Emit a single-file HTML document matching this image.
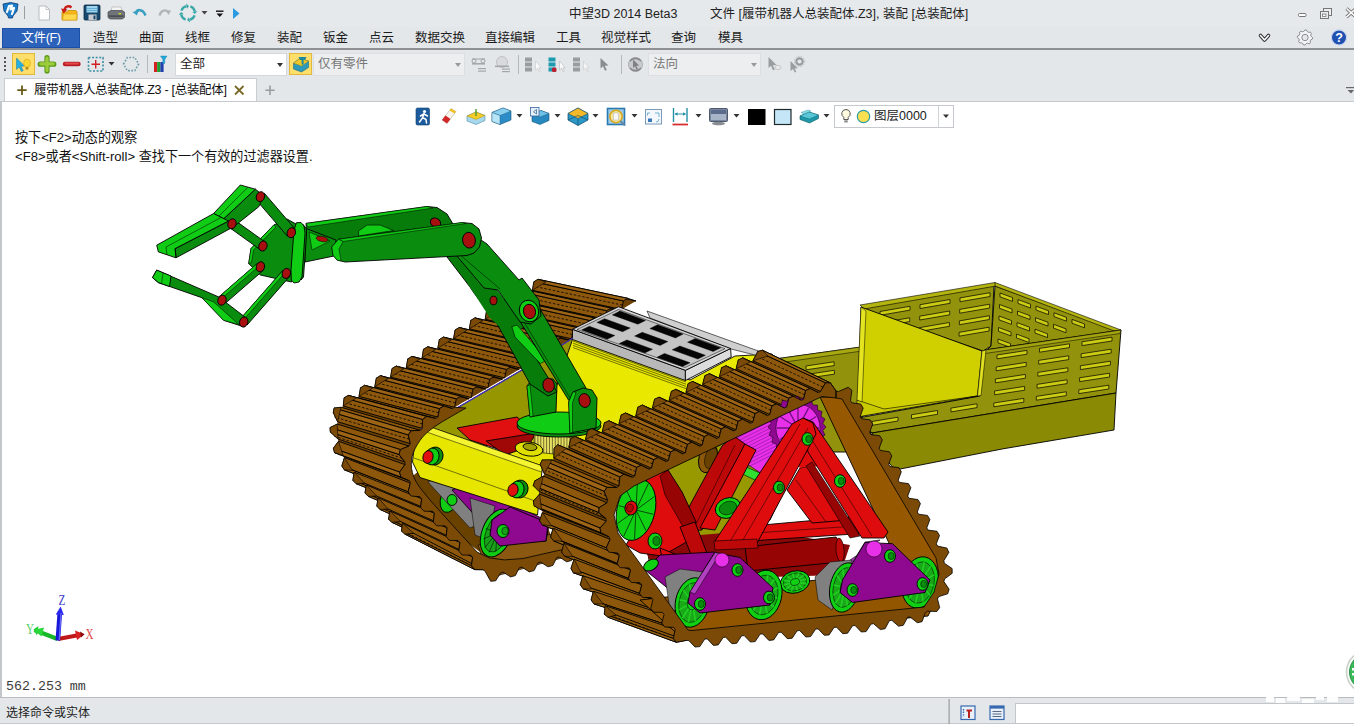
<!DOCTYPE html>
<html lang="zh-CN">
<head>
<meta charset="utf-8">
<title>中望3D 2014 Beta3</title>
<style>
html,body{margin:0;padding:0;}
body{width:1354px;height:724px;overflow:hidden;background:#e4e7ea;position:relative;
 font-family:"Liberation Sans","Noto Sans CJK SC",sans-serif;font-size:12.5px;color:#1a1a1a;}
.abs{position:absolute;white-space:nowrap;}
#titlebar{left:0;top:0;width:1354px;height:27px;background:#e6e9ec;}
#menubar{left:0;top:27px;width:1354px;height:21px;background:#e4e7ea;}
#menuline{left:0;top:48px;width:1354px;height:2px;background:#8e9194;}
#filebtn{left:2px;top:28px;width:78px;height:20px;background:#2d62ba;border:1px solid #1d4fa5;box-sizing:border-box;color:#fff;text-align:center;line-height:18px;font-size:12.5px;letter-spacing:-0.3px;}
.mi{top:29px;height:18px;line-height:18px;font-size:12.5px;color:#1c1c1c;}
#toolbar{left:0;top:50px;width:1354px;height:28px;background:#e4e7ea;}
#tabbar{left:0;top:78px;width:1354px;height:23px;background:#e4e7ea;}
#tab{left:4px;top:78px;width:253px;height:23px;background:#fff;border:1px solid #c9ccd0;border-bottom:none;box-sizing:border-box;}
#viewport{left:0;top:101px;width:1354px;height:596px;background:#fff;border-left:2px solid #c4c7ca;border-top:1px solid #c6cace;box-sizing:border-box;}
#statusbar{left:0;top:697px;width:1354px;height:27px;background:#e4e7ea;border-top:1px solid #b8bcc0;border-bottom:1px solid #c4c8cc;box-sizing:border-box;}
.tt{font-size:12.5px;color:#222;}
.combo{background:#fff;border:1px solid #d5d8db;box-sizing:border-box;height:23px;line-height:21px;font-size:12.5px;}
.combo.dis{background:#eceef0;color:#777;border-color:#dcdfe2;}
.arr{position:absolute;width:0;height:0;border-left:3.5px solid transparent;border-right:3.5px solid transparent;border-top:4px solid #333;}
</style>
</head>
<body>
<!-- TITLE BAR -->
<div id="titlebar" class="abs"></div>
<div class="abs tt" style="left:569px;top:6px;line-height:16px;">中望3D 2014 Beta3</div>
<div class="abs tt" style="left:710px;top:6px;line-height:16px;">文件 [履带机器人总装配体.Z3], 装配 [总装配体]</div>
<!-- MENU BAR -->
<div id="menubar" class="abs"></div>
<div id="filebtn" class="abs">文件(F)</div>
<div class="abs mi" style="left:93px;">造型</div>
<div class="abs mi" style="left:139px;">曲面</div>
<div class="abs mi" style="left:185px;">线框</div>
<div class="abs mi" style="left:231px;">修复</div>
<div class="abs mi" style="left:277px;">装配</div>
<div class="abs mi" style="left:323px;">钣金</div>
<div class="abs mi" style="left:369px;">点云</div>
<div class="abs mi" style="left:415px;">数据交换</div>
<div class="abs mi" style="left:485px;">直接编辑</div>
<div class="abs mi" style="left:556px;">工具</div>
<div class="abs mi" style="left:601px;">视觉样式</div>
<div class="abs mi" style="left:671px;">查询</div>
<div class="abs mi" style="left:718px;">模具</div>
<div id="menuline" class="abs"></div>
<!-- TOOLBAR -->
<div id="toolbar" class="abs"></div>
<div class="abs" style="left:12px;top:53px;width:23px;height:22px;background:#ffdf6b;border:1px solid #e3b63c;box-sizing:border-box;"></div>
<div class="abs combo" style="left:175px;top:53px;width:112px;padding-left:4px;">全部<span class="arr" style="left:101px;top:9px;"></span></div>
<div class="abs" style="left:289px;top:53px;width:23px;height:22px;background:#ffdf6b;border:1px solid #e3b63c;box-sizing:border-box;"></div>
<div class="abs combo dis" style="left:313px;top:53px;width:152px;padding-left:4px;">仅有零件<span class="arr" style="left:141px;top:9px;border-top-color:#999;"></span></div>
<div class="abs combo dis" style="left:648px;top:53px;width:113px;padding-left:4px;">法向<span class="arr" style="left:102px;top:9px;border-top-color:#999;"></span></div>
<!-- TAB BAR -->
<div id="tabbar" class="abs"></div>
<div id="tab" class="abs"></div>
<div class="abs" style="left:34px;top:82px;line-height:16px;font-size:12.5px;letter-spacing:-0.28px;color:#111;">履带机器人总装配体.Z3 - [总装配体]</div>
<!-- VIEWPORT -->
<div id="viewport" class="abs"></div>
<div class="abs" style="left:15px;top:129px;line-height:17px;font-size:13.1px;color:#111;">按下&lt;F2&gt;动态的观察</div>
<div class="abs" style="left:15px;top:148px;line-height:17px;font-size:13.1px;color:#111;">&lt;F8&gt;或者&lt;Shift-roll&gt; 查找下一个有效的过滤器设置.</div>
<div class="abs" style="left:6px;top:678.5px;line-height:16px;font-size:13.3px;color:#3c3c3c;font-family:'Liberation Mono','Noto Serif CJK SC',monospace;">562.253 mm</div>
<svg class="abs" style="left:0;top:0" width="1354" height="724" viewBox="0 0 1354 724" stroke-linejoin="round">
<polygon points="775.0,359.0 861.0,347.0 859.0,409.0 880.0,452.0 790.0,452.0" fill="#92920c" stroke="#000" stroke-width="0.9" />
<polygon points="775.0,359.0 861.0,347.0 862.0,351.0 778.0,363.0" fill="#a8a810" stroke="#000" stroke-width="0.5" />
<polygon points="806.0,366.0 834.0,361.8 834.2,365.6 806.2,369.8" fill="#cccc14" stroke="#000" stroke-width="0.7" />
<polygon points="806.3,374.5 834.3,370.3 834.5,374.1 806.5,378.3" fill="#cccc14" stroke="#000" stroke-width="0.7" />
<polygon points="863.0,308.0 994.0,285.5 991.0,346.0 983.0,351.0 866.0,311.0" fill="#92920c" stroke="#000" stroke-width="0.9" />
<polygon points="880.0,311.5 910.0,306.3 910.0,310.1 880.0,315.3" fill="#cccc14" stroke="#000" stroke-width="0.7" />
<polygon points="879.7,323.0 909.7,317.8 909.7,321.6 879.7,326.8" fill="#cccc14" stroke="#000" stroke-width="0.7" />
<polygon points="920.0,304.7 950.0,299.5 950.0,303.3 920.0,308.5" fill="#cccc14" stroke="#000" stroke-width="0.7" />
<polygon points="919.7,316.2 949.7,311.0 949.7,314.8 919.7,320.0" fill="#cccc14" stroke="#000" stroke-width="0.7" />
<polygon points="919.4,327.7 949.4,322.5 949.4,326.3 919.4,331.5" fill="#cccc14" stroke="#000" stroke-width="0.7" />
<polygon points="960.0,297.9 990.0,292.7 990.0,296.5 960.0,301.7" fill="#cccc14" stroke="#000" stroke-width="0.7" />
<polygon points="959.7,309.4 989.7,304.2 989.7,308.0 959.7,313.2" fill="#cccc14" stroke="#000" stroke-width="0.7" />
<polygon points="959.4,320.9 989.4,315.7 989.4,319.5 959.4,324.7" fill="#cccc14" stroke="#000" stroke-width="0.7" />
<polygon points="959.1,332.4 989.1,327.2 989.1,331.0 959.1,336.2" fill="#cccc14" stroke="#000" stroke-width="0.7" />
<polygon points="995.0,286.0 1118.0,331.0 987.0,350.0 991.0,346.0" fill="#92920c" stroke="#000" stroke-width="0.9" />
<polygon points="1000.0,293.0 1012.5,297.6 1012.5,301.4 1000.0,296.8" fill="#cccc14" stroke="#000" stroke-width="0.7" />
<polygon points="999.5,304.5 1012.0,309.1 1012.0,312.9 999.5,308.3" fill="#cccc14" stroke="#000" stroke-width="0.7" />
<polygon points="999.0,316.0 1011.5,320.6 1011.5,324.4 999.0,319.8" fill="#cccc14" stroke="#000" stroke-width="0.7" />
<polygon points="998.5,327.5 1011.0,332.1 1011.0,335.9 998.5,331.3" fill="#cccc14" stroke="#000" stroke-width="0.7" />
<polygon points="998.0,339.0 1010.5,343.6 1010.5,347.4 998.0,342.8" fill="#cccc14" stroke="#000" stroke-width="0.7" />
<polygon points="1018.0,299.6 1030.5,304.2 1030.5,308.0 1018.0,303.4" fill="#cccc14" stroke="#000" stroke-width="0.7" />
<polygon points="1017.5,311.1 1030.0,315.7 1030.0,319.5 1017.5,314.9" fill="#cccc14" stroke="#000" stroke-width="0.7" />
<polygon points="1017.0,322.6 1029.5,327.2 1029.5,331.0 1017.0,326.4" fill="#cccc14" stroke="#000" stroke-width="0.7" />
<polygon points="1016.5,334.1 1029.0,338.7 1029.0,342.5 1016.5,337.9" fill="#cccc14" stroke="#000" stroke-width="0.7" />
<polygon points="1036.0,306.2 1048.5,310.8 1048.5,314.6 1036.0,310.0" fill="#cccc14" stroke="#000" stroke-width="0.7" />
<polygon points="1035.5,317.7 1048.0,322.3 1048.0,326.1 1035.5,321.5" fill="#cccc14" stroke="#000" stroke-width="0.7" />
<polygon points="1035.0,329.2 1047.5,333.8 1047.5,337.6 1035.0,333.0" fill="#cccc14" stroke="#000" stroke-width="0.7" />
<polygon points="1054.0,312.8 1066.5,317.4 1066.5,321.2 1054.0,316.6" fill="#cccc14" stroke="#000" stroke-width="0.7" />
<polygon points="1053.5,324.3 1066.0,328.9 1066.0,332.7 1053.5,328.1" fill="#cccc14" stroke="#000" stroke-width="0.7" />
<polygon points="1072.0,319.4 1084.5,324.0 1084.5,327.8 1072.0,323.2" fill="#cccc14" stroke="#000" stroke-width="0.7" />
<polygon points="860.0,305.0 995.0,282.5 996.0,286.0 864.0,309.0" fill="#b4b410" stroke="#000" stroke-width="0.6" />
<polygon points="995.0,282.5 1121.0,330.0 1117.0,332.0 995.0,286.0" fill="#b4b410" stroke="#000" stroke-width="0.6" />
<polygon points="985.0,350.0 1121.0,330.0 1116.0,393.0 872.0,433.0 858.0,418.0 980.0,396.0" fill="#92920c" stroke="#000" stroke-width="0.9" />
<polygon points="985.0,350.0 1121.0,330.0 1120.0,333.5 985.0,353.5" fill="#a4a410" stroke="#000" stroke-width="0.5" />
<polygon points="997.0,355.0 1027.0,350.4 1027.0,354.2 997.0,358.8" fill="#cccc14" stroke="#000" stroke-width="0.7" />
<polygon points="996.2,367.0 1026.2,362.4 1026.2,366.2 996.2,370.8" fill="#cccc14" stroke="#000" stroke-width="0.7" />
<polygon points="995.4,379.0 1025.4,374.4 1025.4,378.2 995.4,382.8" fill="#cccc14" stroke="#000" stroke-width="0.7" />
<polygon points="994.6,391.0 1024.6,386.4 1024.6,390.2 994.6,394.8" fill="#cccc14" stroke="#000" stroke-width="0.7" />
<polygon points="993.8,403.0 1023.8,398.4 1023.8,402.2 993.8,406.8" fill="#cccc14" stroke="#000" stroke-width="0.7" />
<polygon points="1039.5,348.4 1069.5,343.8 1069.5,347.6 1039.5,352.2" fill="#cccc14" stroke="#000" stroke-width="0.7" />
<polygon points="1038.7,360.4 1068.7,355.8 1068.7,359.6 1038.7,364.2" fill="#cccc14" stroke="#000" stroke-width="0.7" />
<polygon points="1037.9,372.4 1067.9,367.8 1067.9,371.6 1037.9,376.2" fill="#cccc14" stroke="#000" stroke-width="0.7" />
<polygon points="1037.1,384.4 1067.1,379.8 1067.1,383.6 1037.1,388.2" fill="#cccc14" stroke="#000" stroke-width="0.7" />
<polygon points="1036.3,396.4 1066.3,391.8 1066.3,395.6 1036.3,400.2" fill="#cccc14" stroke="#000" stroke-width="0.7" />
<polygon points="1082.0,341.8 1112.0,337.2 1112.0,341.0 1082.0,345.6" fill="#cccc14" stroke="#000" stroke-width="0.7" />
<polygon points="1081.2,353.8 1111.2,349.2 1111.2,353.0 1081.2,357.6" fill="#cccc14" stroke="#000" stroke-width="0.7" />
<polygon points="1080.4,365.8 1110.4,361.2 1110.4,365.0 1080.4,369.6" fill="#cccc14" stroke="#000" stroke-width="0.7" />
<polygon points="1079.6,377.8 1109.6,373.2 1109.6,377.0 1079.6,381.6" fill="#cccc14" stroke="#000" stroke-width="0.7" />
<polygon points="1078.8,389.8 1108.8,385.2 1108.8,389.0 1078.8,393.6" fill="#cccc14" stroke="#000" stroke-width="0.7" />
<polygon points="872.0,421.5 898.0,417.2 898.0,421.0 872.0,425.3" fill="#cccc14" stroke="#000" stroke-width="0.7" />
<polygon points="911.5,414.8 937.5,410.5 937.5,414.3 911.5,418.6" fill="#cccc14" stroke="#000" stroke-width="0.7" />
<polygon points="951.0,408.1 977.0,403.8 977.0,407.6 951.0,411.9" fill="#cccc14" stroke="#000" stroke-width="0.7" />
<polygon points="872.0,433.0 1116.0,393.0 1114.0,430.0 1002.0,449.0 895.0,470.0 880.0,452.0" fill="#8a8a04" stroke="#000" stroke-width="0.9" />
<polygon points="861.0,307.0 982.0,351.0 977.5,396.0 857.0,417.0" fill="#d0d000" stroke="#000" stroke-width="0.9" />
<polygon points="857.0,400.0 884.0,409.0 977.5,396.0 977.5,396.0 857.0,417.0" fill="#caca00" stroke="#000" stroke-width="0.6" />
<polygon points="861.0,307.0 866.0,311.0 862.0,402.0 857.0,400.0" fill="#e4e420" stroke="#000" stroke-width="0.5" />
<polygon points="982.0,351.0 986.0,350.0 981.0,395.5 977.5,396.0" fill="#e0e020" stroke="#000" stroke-width="0.5" />
<polygon points="636.0,301.0 631.3,303.7 626.6,306.5 621.9,309.2 617.2,312.0 612.6,314.7 607.9,317.5 603.2,320.2 598.5,323.0 593.8,325.7 589.1,328.5 584.4,331.2 579.7,334.0 575.1,336.7 570.4,339.5 565.7,342.2 561.0,345.0 556.3,347.7 551.6,350.5 546.9,353.2 542.2,355.9 537.6,358.7 532.9,361.4 528.2,364.2 523.5,366.9 518.8,369.7 514.1,372.4 509.4,375.2 504.7,377.9 500.1,380.7 495.4,383.4 490.7,386.2 486.0,388.9 481.3,391.7 476.6,394.4 471.9,397.2 467.2,399.9 462.6,402.6 457.9,405.4 453.2,408.1 448.5,410.9 443.8,413.6 439.1,416.4 434.4,419.1 429.9,422.1 425.6,425.4 421.6,429.1 417.9,433.1 414.5,437.3 411.5,441.8 408.7,446.5 406.6,451.5 405.3,456.8 404.9,462.2 405.3,467.6 406.4,472.9 408.1,478.1 410.4,483.0 413.1,487.7 416.2,492.2 419.7,496.4 423.2,500.5 426.8,504.6 430.4,508.7 433.9,512.8 437.5,516.9 441.1,521.0 444.6,525.1 448.2,529.2 451.8,533.3 455.3,537.4 458.9,541.4 462.5,545.5 466.0,549.6 469.6,553.7 473.2,557.8 476.8,561.9 480.3,566.0 483.9,570.1 487.7,573.9 492.9,574.9 420.0,539.0 417.7,537.0 414.1,533.7 410.4,530.4 406.8,527.1 403.1,523.8 399.4,520.5 395.8,517.1 392.4,513.6 389.1,509.9 385.8,506.3 382.5,502.6 379.2,498.9 375.9,495.2 372.6,491.6 369.2,488.0 365.8,484.4 362.4,480.9 359.0,477.3 355.6,473.7 352.2,470.2 349.5,466.0 347.0,461.8 344.4,457.6 341.8,453.4 340.2,448.8 339.1,444.0 337.9,439.2 336.8,434.4 336.3,429.5 337.1,424.7 337.9,419.8 338.8,415.0 339.6,410.1 342.5,406.5 346.9,403.8 351.4,401.1 355.8,398.3 360.2,395.6 364.6,392.9 369.1,390.2 373.5,387.5 377.9,384.8 382.3,382.1 386.7,379.4 391.2,376.7 395.6,374.0 400.0,371.3 404.4,368.6 408.9,365.9 413.3,363.2 417.7,360.5 422.1,357.8 426.6,355.1 431.0,352.4 435.4,349.6 439.8,346.9 444.3,344.2 448.7,341.5 453.1,338.8 457.5,336.1 461.9,333.4 466.4,330.7 470.8,328.0 475.2,325.3 479.6,322.6 484.1,319.9 488.5,317.2 492.9,314.5 497.3,311.8 501.8,309.1 506.2,306.4 510.6,303.6 515.0,300.9 519.5,298.2 523.9,295.5 528.3,292.8 532.7,290.1 537.2,287.4 541.6,284.7 546.0,282.0" fill="#6e4204" stroke="#000" stroke-width="0" />
<polygon points="636.0,301.0 627.7,298.3 538.0,279.3 546.0,282.0" fill="#8e580c" stroke="#000" stroke-width="0.9" />
<polygon points="623.4,300.9 621.6,309.4 532.4,290.3 533.9,281.8" fill="#8e580c" stroke="#000" stroke-width="0.9" />
<polyline points="622.5,305.1 533.0,286.1" fill="none" stroke="#000" stroke-width="0.8" stroke-dasharray="2.5 1.8"/>
<polygon points="627.7,298.3 623.4,300.9 533.9,281.8 538.0,279.3" fill="#9c6414" stroke="#000" stroke-width="0.9" />
<polygon points="546.0,282.0 538.0,279.3 533.9,281.8 532.4,290.3" fill="#7a4a06" stroke="#000" stroke-width="0.6" />
<polygon points="619.3,310.8 611.0,308.1 522.2,288.9 530.2,291.6" fill="#8e580c" stroke="#000" stroke-width="0.9" />
<polygon points="606.7,310.7 604.9,319.2 516.7,299.9 518.1,291.4" fill="#8e580c" stroke="#000" stroke-width="0.9" />
<polyline points="605.8,314.9 517.3,295.7" fill="none" stroke="#000" stroke-width="0.8" stroke-dasharray="2.5 1.8"/>
<polygon points="611.0,308.1 606.7,310.7 518.1,291.4 522.2,288.9" fill="#9c6414" stroke="#000" stroke-width="0.9" />
<polygon points="530.2,291.6 522.2,288.9 518.1,291.4 516.7,299.9" fill="#7a4a06" stroke="#000" stroke-width="0.6" />
<polygon points="602.6,320.6 594.3,317.9 506.5,298.6 514.5,301.3" fill="#8e580c" stroke="#000" stroke-width="0.9" />
<polygon points="590.0,320.5 588.2,329.0 500.9,309.6 502.4,301.1" fill="#8e580c" stroke="#000" stroke-width="0.9" />
<polyline points="589.1,324.7 501.5,305.3" fill="none" stroke="#000" stroke-width="0.8" stroke-dasharray="2.5 1.8"/>
<polygon points="594.3,317.9 590.0,320.5 502.4,301.1 506.5,298.6" fill="#9c6414" stroke="#000" stroke-width="0.9" />
<polygon points="514.5,301.3 506.5,298.6 502.4,301.1 500.9,309.6" fill="#7a4a06" stroke="#000" stroke-width="0.6" />
<polygon points="585.9,330.4 577.6,327.7 490.7,308.2 498.7,310.9" fill="#8e580c" stroke="#000" stroke-width="0.9" />
<polygon points="573.2,330.2 571.5,338.8 485.2,319.2 486.6,310.7" fill="#8e580c" stroke="#000" stroke-width="0.9" />
<polyline points="572.4,334.5 485.7,315.0" fill="none" stroke="#000" stroke-width="0.8" stroke-dasharray="2.5 1.8"/>
<polygon points="577.6,327.7 573.2,330.2 486.6,310.7 490.7,308.2" fill="#9c6414" stroke="#000" stroke-width="0.9" />
<polygon points="498.7,310.9 490.7,308.2 486.6,310.7 485.2,319.2" fill="#7a4a06" stroke="#000" stroke-width="0.6" />
<polygon points="569.2,340.2 560.9,337.5 474.9,317.9 482.9,320.6" fill="#8e580c" stroke="#000" stroke-width="0.9" />
<polygon points="556.5,340.0 554.8,348.6 469.4,328.9 470.8,320.4" fill="#8e580c" stroke="#000" stroke-width="0.9" />
<polyline points="555.7,344.3 470.0,324.6" fill="none" stroke="#000" stroke-width="0.8" stroke-dasharray="2.5 1.8"/>
<polygon points="560.9,337.5 556.5,340.0 470.8,320.4 474.9,317.9" fill="#9c6414" stroke="#000" stroke-width="0.9" />
<polygon points="482.9,320.6 474.9,317.9 470.8,320.4 469.4,328.9" fill="#7a4a06" stroke="#000" stroke-width="0.6" />
<polygon points="552.5,349.9 544.2,347.3 459.2,327.5 467.2,330.2" fill="#8e580c" stroke="#000" stroke-width="0.9" />
<polygon points="539.8,349.8 538.1,358.4 453.6,338.5 455.1,330.0" fill="#8e580c" stroke="#000" stroke-width="0.9" />
<polyline points="539.0,354.1 454.2,334.3" fill="none" stroke="#000" stroke-width="0.8" stroke-dasharray="2.5 1.8"/>
<polygon points="544.2,347.3 539.8,349.8 455.1,330.0 459.2,327.5" fill="#9c6414" stroke="#000" stroke-width="0.9" />
<polygon points="467.2,330.2 459.2,327.5 455.1,330.0 453.6,338.5" fill="#7a4a06" stroke="#000" stroke-width="0.6" />
<polygon points="535.8,359.7 527.5,357.1 443.4,337.1 451.4,339.9" fill="#8e580c" stroke="#000" stroke-width="0.9" />
<polygon points="523.1,359.6 521.4,368.2 437.9,348.1 439.3,339.6" fill="#8e580c" stroke="#000" stroke-width="0.9" />
<polyline points="522.3,363.9 438.4,343.9" fill="none" stroke="#000" stroke-width="0.8" stroke-dasharray="2.5 1.8"/>
<polygon points="527.5,357.1 523.1,359.6 439.3,339.6 443.4,337.1" fill="#9c6414" stroke="#000" stroke-width="0.9" />
<polygon points="451.4,339.9 443.4,337.1 439.3,339.6 437.9,348.1" fill="#7a4a06" stroke="#000" stroke-width="0.6" />
<polygon points="519.1,369.5 510.8,366.9 427.6,346.8 435.7,349.5" fill="#8e580c" stroke="#000" stroke-width="0.9" />
<polygon points="506.4,369.4 504.7,377.9 422.1,357.8 423.5,349.3" fill="#8e580c" stroke="#000" stroke-width="0.9" />
<polyline points="505.6,373.7 422.7,353.6" fill="none" stroke="#000" stroke-width="0.8" stroke-dasharray="2.5 1.8"/>
<polygon points="510.8,366.9 506.4,369.4 423.5,349.3 427.6,346.8" fill="#9c6414" stroke="#000" stroke-width="0.9" />
<polygon points="435.7,349.5 427.6,346.8 423.5,349.3 422.1,357.8" fill="#7a4a06" stroke="#000" stroke-width="0.6" />
<polygon points="502.4,379.3 494.1,376.6 411.9,356.4 419.9,359.1" fill="#8e580c" stroke="#000" stroke-width="0.9" />
<polygon points="489.7,379.2 488.0,387.7 406.3,367.4 407.8,358.9" fill="#8e580c" stroke="#000" stroke-width="0.9" />
<polyline points="488.9,383.5 406.9,363.2" fill="none" stroke="#000" stroke-width="0.8" stroke-dasharray="2.5 1.8"/>
<polygon points="494.1,376.6 489.7,379.2 407.8,358.9 411.9,356.4" fill="#9c6414" stroke="#000" stroke-width="0.9" />
<polygon points="419.9,359.1 411.9,356.4 407.8,358.9 406.3,367.4" fill="#7a4a06" stroke="#000" stroke-width="0.6" />
<polygon points="485.7,389.1 477.4,386.4 396.1,366.1 404.1,368.8" fill="#8e580c" stroke="#000" stroke-width="0.9" />
<polygon points="473.0,389.0 471.3,397.5 390.6,377.1 392.0,368.6" fill="#8e580c" stroke="#000" stroke-width="0.9" />
<polyline points="472.2,393.3 391.2,372.8" fill="none" stroke="#000" stroke-width="0.8" stroke-dasharray="2.5 1.8"/>
<polygon points="477.4,386.4 473.0,389.0 392.0,368.6 396.1,366.1" fill="#9c6414" stroke="#000" stroke-width="0.9" />
<polygon points="404.1,368.8 396.1,366.1 392.0,368.6 390.6,377.1" fill="#7a4a06" stroke="#000" stroke-width="0.6" />
<polygon points="469.0,398.9 460.7,396.2 380.3,375.7 388.4,378.4" fill="#8e580c" stroke="#000" stroke-width="0.9" />
<polygon points="456.3,398.8 454.6,407.3 374.8,386.7 376.3,378.2" fill="#8e580c" stroke="#000" stroke-width="0.9" />
<polyline points="455.5,403.0 375.4,382.5" fill="none" stroke="#000" stroke-width="0.8" stroke-dasharray="2.5 1.8"/>
<polygon points="460.7,396.2 456.3,398.8 376.3,378.2 380.3,375.7" fill="#9c6414" stroke="#000" stroke-width="0.9" />
<polygon points="388.4,378.4 380.3,375.7 376.3,378.2 374.8,386.7" fill="#7a4a06" stroke="#000" stroke-width="0.6" />
<polygon points="452.3,408.7 444.0,406.0 364.6,385.3 372.6,388.1" fill="#8e580c" stroke="#000" stroke-width="0.9" />
<polygon points="439.6,408.6 437.9,417.1 359.0,396.4 360.5,387.9" fill="#8e580c" stroke="#000" stroke-width="0.9" />
<polyline points="438.7,412.8 359.6,392.1" fill="none" stroke="#000" stroke-width="0.8" stroke-dasharray="2.5 1.8"/>
<polygon points="444.0,406.0 439.6,408.6 360.5,387.9 364.6,385.3" fill="#9c6414" stroke="#000" stroke-width="0.9" />
<polygon points="372.6,388.1 364.6,385.3 360.5,387.9 359.0,396.4" fill="#7a4a06" stroke="#000" stroke-width="0.6" />
<polygon points="435.5,418.5 426.7,416.4 348.2,395.4 356.8,397.7" fill="#8e580c" stroke="#000" stroke-width="0.9" />
<polygon points="422.7,419.4 422.2,428.4 343.3,406.0 344.1,397.9" fill="#8e580c" stroke="#000" stroke-width="0.9" />
<polyline points="422.5,423.9 343.9,402.4" fill="none" stroke="#000" stroke-width="0.8" stroke-dasharray="2.5 1.8"/>
<polygon points="426.7,416.4 422.7,419.4 344.1,397.9 348.2,395.4" fill="#9c6414" stroke="#000" stroke-width="0.9" />
<polygon points="356.8,397.7 348.2,395.4 344.1,397.9 343.3,406.0" fill="#7a4a06" stroke="#000" stroke-width="0.6" />
<polygon points="420.4,430.4 411.3,430.8 334.1,408.1 341.1,407.3" fill="#8e580c" stroke="#000" stroke-width="0.9" />
<polygon points="408.3,434.9 410.3,443.6 337.6,421.7 333.3,412.6" fill="#8e580c" stroke="#000" stroke-width="0.9" />
<polyline points="409.3,439.2 334.3,417.0" fill="none" stroke="#000" stroke-width="0.8" stroke-dasharray="2.5 1.8"/>
<polygon points="411.3,430.8 408.3,434.9 333.3,412.6 334.1,408.1" fill="#9c6414" stroke="#000" stroke-width="0.9" />
<polygon points="341.1,407.3 334.1,408.1 333.3,412.6 337.6,421.7" fill="#7a4a06" stroke="#000" stroke-width="0.6" />
<polygon points="409.0,446.0 400.4,449.6 330.0,427.6 337.2,424.1" fill="#8e580c" stroke="#000" stroke-width="0.9" />
<polygon points="399.1,454.5 404.9,461.9 337.9,438.9 330.4,432.1" fill="#8e580c" stroke="#000" stroke-width="0.9" />
<polyline points="402.0,458.2 333.3,435.8" fill="none" stroke="#000" stroke-width="0.8" stroke-dasharray="2.5 1.8"/>
<polygon points="400.4,449.6 399.1,454.5 330.4,432.1 330.0,427.6" fill="#9c6414" stroke="#000" stroke-width="0.9" />
<polygon points="337.2,424.1 330.0,427.6 330.4,432.1 337.9,438.9" fill="#7a4a06" stroke="#000" stroke-width="0.6" />
<polygon points="405.0,464.6 399.6,472.1 333.4,448.2 338.5,441.3" fill="#8e580c" stroke="#000" stroke-width="0.9" />
<polygon points="400.9,477.0 409.3,480.6 343.2,455.5 334.5,452.6" fill="#8e580c" stroke="#000" stroke-width="0.9" />
<polyline points="405.1,478.8 338.7,454.5" fill="none" stroke="#000" stroke-width="0.8" stroke-dasharray="2.5 1.8"/>
<polygon points="399.6,472.1 400.9,477.0 334.5,452.6 333.4,448.2" fill="#9c6414" stroke="#000" stroke-width="0.9" />
<polygon points="338.5,441.3 333.4,448.2 334.5,452.6 343.2,455.5" fill="#7a4a06" stroke="#000" stroke-width="0.6" />
<polygon points="410.4,483.1 408.1,491.9 341.9,465.9 344.4,457.6" fill="#8e580c" stroke="#000" stroke-width="0.9" />
<polygon points="411.0,496.0 419.9,496.7 352.4,470.4 344.3,469.8" fill="#8e580c" stroke="#000" stroke-width="0.9" />
<polyline points="415.5,496.3 348.8,470.2" fill="none" stroke="#000" stroke-width="0.8" stroke-dasharray="2.5 1.8"/>
<polygon points="408.1,491.9 411.0,496.0 344.3,469.8 341.9,465.9" fill="#9c6414" stroke="#000" stroke-width="0.9" />
<polygon points="344.4,457.6 341.9,465.9 344.3,469.8 352.4,470.4" fill="#7a4a06" stroke="#000" stroke-width="0.6" />
<polygon points="421.7,498.7 420.6,507.4 352.9,480.3 354.1,472.2" fill="#8e580c" stroke="#000" stroke-width="0.9" />
<polygon points="423.9,511.2 432.7,511.3 364.6,483.2 356.0,483.6" fill="#8e580c" stroke="#000" stroke-width="0.9" />
<polyline points="428.3,511.2 360.4,483.7" fill="none" stroke="#000" stroke-width="0.8" stroke-dasharray="2.5 1.8"/>
<polygon points="420.6,507.4 423.9,511.2 356.0,483.6 352.9,480.3" fill="#9c6414" stroke="#000" stroke-width="0.9" />
<polygon points="354.1,472.2 352.9,480.3 356.0,483.6 364.6,483.2" fill="#7a4a06" stroke="#000" stroke-width="0.6" />
<polygon points="434.4,513.3 433.3,522.0 365.0,493.0 366.3,484.9" fill="#8e580c" stroke="#000" stroke-width="0.9" />
<polygon points="436.7,525.8 445.4,525.9 376.6,496.0 368.2,496.3" fill="#8e580c" stroke="#000" stroke-width="0.9" />
<polyline points="441.0,525.8 372.5,496.4" fill="none" stroke="#000" stroke-width="0.8" stroke-dasharray="2.5 1.8"/>
<polygon points="433.3,522.0 436.7,525.8 368.2,496.3 365.0,493.0" fill="#9c6414" stroke="#000" stroke-width="0.9" />
<polygon points="366.3,484.9 365.0,493.0 368.2,496.3 376.6,496.0" fill="#7a4a06" stroke="#000" stroke-width="0.6" />
<polygon points="447.1,527.9 446.1,536.6 376.8,506.0 378.2,497.8" fill="#8e580c" stroke="#000" stroke-width="0.9" />
<polygon points="449.4,540.4 458.1,540.5 388.3,509.1 379.9,509.4" fill="#8e580c" stroke="#000" stroke-width="0.9" />
<polyline points="453.7,540.4 384.2,509.5" fill="none" stroke="#000" stroke-width="0.8" stroke-dasharray="2.5 1.8"/>
<polygon points="446.1,536.6 449.4,540.4 379.9,509.4 376.8,506.0" fill="#9c6414" stroke="#000" stroke-width="0.9" />
<polygon points="378.2,497.8 376.8,506.0 379.9,509.4 388.3,509.1" fill="#7a4a06" stroke="#000" stroke-width="0.6" />
<polygon points="459.9,542.5 458.8,551.2 388.6,519.1 389.9,510.9" fill="#8e580c" stroke="#000" stroke-width="0.9" />
<polygon points="462.1,555.0 470.8,555.1 400.7,521.5 391.8,522.3" fill="#8e580c" stroke="#000" stroke-width="0.9" />
<polyline points="466.4,555.0 396.2,522.3" fill="none" stroke="#000" stroke-width="0.8" stroke-dasharray="2.5 1.8"/>
<polygon points="458.8,551.2 462.1,555.0 391.8,522.3 388.6,519.1" fill="#9c6414" stroke="#000" stroke-width="0.9" />
<polygon points="389.9,510.9 388.6,519.1 391.8,522.3 400.7,521.5" fill="#7a4a06" stroke="#000" stroke-width="0.6" />
<polygon points="472.6,557.1 471.5,565.8 401.5,531.0 402.5,523.2" fill="#8e580c" stroke="#000" stroke-width="0.9" />
<polygon points="474.8,569.6 483.5,569.7 413.7,533.3 404.9,534.1" fill="#8e580c" stroke="#000" stroke-width="0.9" />
<polyline points="479.2,569.6 409.2,534.1" fill="none" stroke="#000" stroke-width="0.8" stroke-dasharray="2.5 1.8"/>
<polygon points="471.5,565.8 474.8,569.6 404.9,534.1 401.5,531.0" fill="#9c6414" stroke="#000" stroke-width="0.9" />
<polygon points="402.5,523.2 401.5,531.0 404.9,534.1 413.7,533.3" fill="#7a4a06" stroke="#000" stroke-width="0.6" />
<polygon points="421.0,429.0 527.0,367.0 573.0,338.0 600.0,360.0 590.0,440.0 470.0,446.0" fill="#969600" stroke="#000" stroke-width="0.9" />
<polygon points="573.0,338.0 690.0,380.0 735.0,356.0 772.0,354.0 776.0,366.0 562.0,462.0 540.0,470.0 545.0,420.0" fill="#e8e800" stroke="#000" stroke-width="0.9" />
<polyline points="573.0,341.0 686.0,382.0" fill="none" stroke="#000" stroke-width="0.5" />
<polyline points="573.0,343.2 686.0,384.2" fill="none" stroke="#000" stroke-width="0.5" />
<polyline points="573.0,345.4 686.0,386.4" fill="none" stroke="#000" stroke-width="0.5" />
<polyline points="573.0,347.6 686.0,388.6" fill="none" stroke="#000" stroke-width="0.5" />
<polygon points="647.0,311.0 764.0,353.0 763.0,357.0 731.0,349.0 650.0,318.0" fill="#cfcfcf" stroke="#000" stroke-width="0.6" />
<polygon points="572.5,329.3 685.4,370.3 685.4,380.5 572.5,339.5" fill="#b8b8b8" stroke="#000" stroke-width="0.9" />
<polygon points="685.4,370.3 730.6,348.5 731.2,357.0 685.4,380.5" fill="#dcdcdc" stroke="#000" stroke-width="0.9" />
<polygon points="572.5,329.3 618.5,306.7 730.6,348.5 685.4,370.3" fill="#d4d4d4" stroke="#000" stroke-width="0.9" />
<polygon points="577.0,329.5 618.5,309.5 725.0,348.7 685.0,367.5" fill="#c4c4c4" stroke="#000" stroke-width="0.5" />
<polygon points="581.6,330.0 607.2,339.3 614.8,335.5 589.3,326.2" fill="#050505" stroke="#000" stroke-width="0.4" />
<polygon points="596.9,322.4 622.5,331.7 630.2,328.0 604.6,318.7" fill="#050505" stroke="#000" stroke-width="0.4" />
<polygon points="612.3,314.9 637.8,324.2 645.5,320.4 619.9,311.1" fill="#050505" stroke="#000" stroke-width="0.4" />
<polygon points="619.2,343.6 644.8,352.9 652.5,349.2 626.9,339.9" fill="#050505" stroke="#000" stroke-width="0.4" />
<polygon points="634.6,336.1 660.1,345.4 667.8,341.6 642.2,332.3" fill="#050505" stroke="#000" stroke-width="0.4" />
<polygon points="649.9,328.6 675.5,337.9 683.1,334.1 657.6,324.8" fill="#050505" stroke="#000" stroke-width="0.4" />
<polygon points="656.9,357.3 682.4,366.6 690.1,362.8 664.5,353.5" fill="#050505" stroke="#000" stroke-width="0.4" />
<polygon points="672.2,349.8 697.8,359.1 705.4,355.3 679.9,346.0" fill="#050505" stroke="#000" stroke-width="0.4" />
<polygon points="687.5,342.2 713.1,351.5 720.8,347.8 695.2,338.5" fill="#050505" stroke="#000" stroke-width="0.4" />
<polyline points="421.0,429.0 527.0,367.0 573.0,338.0" fill="none" stroke="#4030c0" stroke-width="1.2" />
<polygon points="470.0,436.0 545.0,420.0 575.0,440.0 560.0,475.0 540.0,468.0" fill="#e4e400" stroke="#000" stroke-width="0" />
<polygon points="457.0,428.0 517.0,417.0 536.0,433.0 510.0,453.0 470.0,440.0" fill="#e01010" stroke="#000" stroke-width="0.9" />
<polygon points="486.0,441.0 536.0,433.0 528.0,447.0 505.0,455.0" fill="#a00808" stroke="#000" stroke-width="0.9" />
<polygon points="534.0,432.0 574.0,438.0 574.0,456.0 534.0,452.0" fill="#e8e060" stroke="#000" stroke-width="0.6" />
<polyline points="535.0,434.0 535.0,452.0" fill="none" stroke="#000" stroke-width="0.5" />
<polyline points="537.9,434.3 537.9,452.3" fill="none" stroke="#000" stroke-width="0.5" />
<polyline points="540.8,434.6 540.8,452.6" fill="none" stroke="#000" stroke-width="0.5" />
<polyline points="543.7,434.9 543.7,452.9" fill="none" stroke="#000" stroke-width="0.5" />
<polyline points="546.6,435.2 546.6,453.2" fill="none" stroke="#000" stroke-width="0.5" />
<polyline points="549.5,435.5 549.5,453.5" fill="none" stroke="#000" stroke-width="0.5" />
<polyline points="552.4,435.8 552.4,453.8" fill="none" stroke="#000" stroke-width="0.5" />
<polyline points="555.3,436.1 555.3,454.1" fill="none" stroke="#000" stroke-width="0.5" />
<polyline points="558.2,436.4 558.2,454.4" fill="none" stroke="#000" stroke-width="0.5" />
<polyline points="561.1,436.7 561.1,454.7" fill="none" stroke="#000" stroke-width="0.5" />
<polyline points="564.0,437.0 564.0,455.0" fill="none" stroke="#000" stroke-width="0.5" />
<polyline points="566.9,437.3 566.9,455.3" fill="none" stroke="#000" stroke-width="0.5" />
<polyline points="569.8,437.6 569.8,455.6" fill="none" stroke="#000" stroke-width="0.5" />
<polyline points="572.7,437.9 572.7,455.9" fill="none" stroke="#000" stroke-width="0.5" />
<ellipse cx="529.0" cy="449.0" rx="14.0" ry="7.0" fill="#e0e000" stroke="#000" stroke-width="0.9" transform="rotate(8 529.0 449.0)"/>
<ellipse cx="530.0" cy="447.0" rx="7.0" ry="3.5" fill="#a0a000" stroke="#000" stroke-width="0.9" transform="rotate(8 530.0 447.0)"/>
<polygon points="408.0,480.0 422.0,500.0 450.0,530.0 487.0,557.0 556.0,549.0 545.0,520.0 420.0,470.0" fill="#6a4200" stroke="#000" stroke-width="0" />
<polygon points="489.0,578.0 580.0,553.0 560.0,533.0 478.0,545.0" fill="#8a5810" stroke="#000" stroke-width="0.6" />
<ellipse cx="450.0" cy="498.0" rx="9.0" ry="15.0" fill="#10cc14" stroke="#000" stroke-width="0.9" transform="rotate(20 450.0 498.0)"/>
<polygon points="428.0,482.0 442.0,475.0 470.0,492.0 488.0,520.0 470.0,528.0" fill="#808080" stroke="#000" stroke-width="0.5" />
<polygon points="452.0,490.0 470.0,482.0 545.0,520.0 549.0,524.0 546.0,541.0 500.0,544.0 488.0,530.0" fill="#8e0890" stroke="#000" stroke-width="0.9" />
<polygon points="470.0,498.0 495.0,506.0 488.0,540.0 475.0,535.0" fill="#787878" stroke="#000" stroke-width="0.5" />
<ellipse cx="497.0" cy="533.0" rx="15.0" ry="25.0" fill="#10cc14" stroke="#000" stroke-width="0.9" transform="rotate(22 497.0 533.0)"/>
<ellipse cx="497.0" cy="533.0" rx="11.0" ry="20.0" fill="#18a018" stroke="#000" stroke-width="0.5" transform="rotate(22 497.0 533.0)"/>
<polyline points="485.0,533.0 509.0,533.0" fill="none" stroke="#000" stroke-width="0.5" transform="rotate(22 497 533)"/>
<polyline points="486.6,522.5 507.4,543.5" fill="none" stroke="#000" stroke-width="0.5" transform="rotate(22 497 533)"/>
<polyline points="491.0,514.8 503.0,551.2" fill="none" stroke="#000" stroke-width="0.5" transform="rotate(22 497 533)"/>
<polyline points="497.0,512.0 497.0,554.0" fill="none" stroke="#000" stroke-width="0.5" transform="rotate(22 497 533)"/>
<polyline points="503.0,514.8 491.0,551.2" fill="none" stroke="#000" stroke-width="0.5" transform="rotate(22 497 533)"/>
<polyline points="507.4,522.5 486.6,543.5" fill="none" stroke="#000" stroke-width="0.5" transform="rotate(22 497 533)"/>
<polygon points="492.0,520.0 510.0,507.0 548.0,523.0 546.0,541.0 500.0,546.0 490.0,535.0" fill="#8e0890" stroke="#000" stroke-width="0.9" />
<ellipse cx="503.0" cy="531.0" rx="6.0" ry="6.5" fill="#10cc14" stroke="#000" stroke-width="0.9"/>
<ellipse cx="505.0" cy="531.0" rx="3.2" ry="3.8" fill="#18a018" stroke="#000" stroke-width="0.5"/>
<ellipse cx="452.0" cy="500.0" rx="5.0" ry="5.5" fill="#10cc14" stroke="#000" stroke-width="0.9"/>
<polygon points="427.5,426.0 542.5,466.0 537.5,515.0 420.0,477.5 412.5,462.0 415.0,440.0" fill="#e6e600" stroke="#000" stroke-width="0.9" />
<polygon points="427.5,426.0 542.5,466.0 541.5,472.0 425.0,431.5" fill="#f4f430" stroke="#000" stroke-width="0.5" />
<polyline points="414.0,458.0 538.0,502.0" fill="none" stroke="#000" stroke-width="0.5" />
<ellipse cx="435.0" cy="456.0" rx="8.0" ry="9.0" fill="#0a8c0e" stroke="#000" stroke-width="0.9" transform="rotate(15 435.0 456.0)"/>
<ellipse cx="432.0" cy="456.5" rx="7.0" ry="8.5" fill="#10cc14" stroke="#000" stroke-width="0.9" transform="rotate(15 432.0 456.5)"/>
<ellipse cx="428.0" cy="457.0" rx="5.0" ry="6.5" fill="#e01010" stroke="#000" stroke-width="0.9" transform="rotate(15 428.0 457.0)"/>
<ellipse cx="520.0" cy="489.0" rx="8.0" ry="9.0" fill="#0a8c0e" stroke="#000" stroke-width="0.9" transform="rotate(15 520.0 489.0)"/>
<ellipse cx="517.0" cy="489.5" rx="7.0" ry="8.5" fill="#10cc14" stroke="#000" stroke-width="0.9" transform="rotate(15 517.0 489.5)"/>
<ellipse cx="513.0" cy="490.0" rx="5.0" ry="6.5" fill="#e01010" stroke="#000" stroke-width="0.9" transform="rotate(15 513.0 490.0)"/>
<polygon points="636.0,301.0 636.0,301.0 636.0,301.0 636.0,301.0 636.0,301.0 636.0,301.0 636.0,301.0 636.0,301.0 636.0,301.0 636.0,301.0 636.0,301.0 636.0,301.0 636.0,301.0 636.0,301.0 636.0,301.0 636.0,301.0 636.0,301.0 636.0,301.0 636.0,301.0 636.0,301.0 636.0,301.0 636.0,301.0 636.0,301.0 636.0,301.0 636.0,301.0 636.0,301.0 636.0,301.0 636.0,301.0 636.0,301.0 636.0,301.0 636.0,301.0 636.0,301.0 636.0,301.0 636.0,301.0 636.0,301.0 636.0,301.0 636.0,301.0 636.0,301.0 636.0,301.0 636.0,301.0 636.0,301.0 636.0,301.0 636.0,301.0 636.0,301.0 636.0,301.0 636.0,301.0 636.0,301.0 636.0,301.0 636.0,301.0 636.0,301.0 636.0,301.0 636.0,301.0 636.0,301.0 636.0,301.0 636.0,301.0 636.0,301.0 636.0,301.0 636.0,301.0 636.0,301.0 636.0,301.0 636.0,301.0 636.0,301.0 636.0,301.0 636.0,301.0 636.0,301.0 636.0,301.0 636.0,301.0 636.0,301.0 636.0,301.0 636.0,301.0 636.0,301.0 636.0,301.0 636.0,301.0 636.0,301.0 636.0,301.0 636.0,301.0 636.0,301.0 636.0,301.0 636.0,301.0 636.0,301.0 636.0,301.0 546.0,282.0 546.0,282.0 546.0,282.0 546.0,282.0 546.0,282.0 546.0,282.0 546.0,282.0 546.0,282.0 546.0,282.0 546.0,282.0 546.0,282.0 546.0,282.0 546.0,282.0 546.0,282.0 546.0,282.0 546.0,282.0 546.0,282.0 546.0,282.0 546.0,282.0 546.0,282.0 546.0,282.0 546.0,282.0 546.0,282.0 546.0,282.0 546.0,282.0 546.0,282.0 546.0,282.0 546.0,282.0 546.0,282.0 546.0,282.0 546.0,282.0 546.0,282.0 546.0,282.0 546.0,282.0 546.0,282.0 546.0,282.0 546.0,282.0 546.0,282.0 546.0,282.0 546.0,282.0 546.0,282.0 546.0,282.0 546.0,282.0 546.0,282.0 546.0,282.0 546.0,282.0 546.0,282.0 546.0,282.0 546.0,282.0 546.0,282.0 546.0,282.0 546.0,282.0 546.0,282.0 546.0,282.0 546.0,282.0 546.0,282.0 546.0,282.0 546.0,282.0 546.0,282.0 546.0,282.0 546.0,282.0 546.0,282.0 546.0,282.0 546.0,282.0 546.0,282.0 546.0,282.0 546.0,282.0 546.0,282.0 546.0,282.0 546.0,282.0 546.0,282.0 546.0,282.0 546.0,282.0 546.0,282.0 546.0,282.0 546.0,282.0 546.0,282.0 546.0,282.0 546.0,282.0 546.0,282.0 546.0,282.0" fill="#6e4204" stroke="#000" stroke-width="0" />
<polygon points="454.6,407.3 452.3,408.7 444.0,406.0 439.6,408.6 437.9,417.1 435.5,418.5 426.7,416.4 422.7,419.4 422.2,428.4 420.4,430.4 411.3,430.8 408.3,434.9 410.3,443.6 409.0,446.0 400.4,449.6 399.1,454.5 404.9,461.9 405.0,464.6 399.6,472.1 400.9,477.0 409.3,480.6 410.4,483.1 408.1,491.9 411.0,496.0 419.9,496.7 421.7,498.7 420.6,507.4 423.9,511.2 432.7,511.3 434.4,513.3 433.3,522.0 436.7,525.8 445.4,525.9 447.1,527.9 446.1,536.6 449.4,540.4 458.1,540.5 459.9,542.5 458.8,551.2 462.1,555.0 470.8,555.1 472.6,557.1 471.5,565.8 474.8,569.6 483.5,569.7 485.3,571.7 490.7,581.3 495.7,580.8 500.6,572.9 503.2,572.2 510.5,576.9 515.4,575.6 519.3,567.8 521.9,567.1 529.2,571.9 534.1,570.6 538.0,562.8 540.6,562.1 547.9,566.8 552.8,565.5 556.7,557.7 559.3,557.0 566.6,561.8 571.5,560.5 575.4,552.7 578.0,552.0 578.0,546.0 572.5,547.2 561.5,549.8 545.0,553.5 523.0,558.5 504.4,559.9 489.1,557.8 477.2,552.1 468.8,542.9 460.6,534.0 452.9,525.5 445.5,517.4 438.5,509.6 432.3,502.6 427.0,496.4 422.6,490.9 418.9,486.1 416.0,481.5 413.8,477.0 412.4,472.6 411.6,468.4 411.3,464.2 411.5,460.2 412.2,456.4 413.3,452.6 415.0,448.8 417.2,444.8 419.9,440.6 423.1,436.4 427.9,431.8 434.3,426.9 442.2,421.8 451.8,416.2 458.9,412.1 463.6,409.4 466.0,408.0" fill="#7a4a06" stroke="#000" stroke-width="0.8" />
<ellipse cx="559.0" cy="426.0" rx="42.0" ry="11.0" fill="#0a8c0e" stroke="#000" stroke-width="0.9"/>
<ellipse cx="559.0" cy="423.0" rx="42.0" ry="11.0" fill="#10cc14" stroke="#000" stroke-width="0.9"/>
<polygon points="527.0,386.0 533.0,378.0 553.0,379.0 557.0,384.0 556.0,412.0 530.0,417.0" fill="#0a8c0e" stroke="#000" stroke-width="0.9" />
<polygon points="527.0,386.0 530.0,385.0 533.0,416.0 530.0,417.0" fill="#10cc14" stroke="#000" stroke-width="0.5" />
<polygon points="447.0,257.0 462.0,249.0 500.0,300.0 557.0,392.0 548.0,396.0 530.0,384.0 496.0,322.0 474.0,293.0 470.0,287.0" fill="#087c0a" stroke="#000" stroke-width="0.9" />
<polygon points="468.0,284.0 490.0,280.0 524.0,326.0 512.0,338.0 490.0,318.0" fill="#087c0a" stroke="#000" stroke-width="0" />
<ellipse cx="493.5" cy="300.5" rx="3.5" ry="4.3" fill="#a81010" stroke="#000" stroke-width="0.9"/>
<polygon points="511.8,326.7 517.0,325.0 547.0,360.0 540.3,363.5 515.0,337.0" fill="#10cc14" stroke="#000" stroke-width="0.6" />
<polygon points="477.0,262.0 483.0,259.0 497.0,277.0 493.0,281.0" fill="#10cc14" stroke="#000" stroke-width="0.6" />
<polygon points="518.0,318.0 536.0,302.0 586.0,388.0 578.0,400.0 568.7,400.3" fill="#0a8c0e" stroke="#000" stroke-width="0.9" />
<polyline points="521.0,317.0 570.0,398.0" fill="none" stroke="#000" stroke-width="0.5" />
<polygon points="456.0,255.0 481.0,240.0 487.0,244.0 519.0,280.0 522.0,278.0 539.0,300.0 541.0,316.0 531.0,324.0 520.0,322.0 498.0,290.0 484.0,288.0" fill="#0a8c0e" stroke="#000" stroke-width="0.9" />
<polyline points="459.0,254.0 500.0,289.0" fill="none" stroke="#000" stroke-width="0.5" />
<ellipse cx="529.0" cy="311.0" rx="9.5" ry="11.0" fill="#10cc14" stroke="#000" stroke-width="0.9" transform="rotate(-20 529.0 311.0)"/>
<ellipse cx="529.5" cy="311.5" rx="6.0" ry="7.3" fill="#a81010" stroke="#000" stroke-width="0.9" transform="rotate(-15 529.5 311.5)"/>
<ellipse cx="548.6" cy="385.2" rx="5.7" ry="7.0" fill="#a81010" stroke="#000" stroke-width="0.9" transform="rotate(-10 548.6 385.2)"/>
<polygon points="568.7,402.0 573.0,392.0 583.0,388.0 592.0,390.0 597.0,398.0 596.0,428.0 570.0,433.0" fill="#0a8c0e" stroke="#000" stroke-width="0.9" />
<polygon points="568.7,402.0 573.0,392.0 576.0,392.0 572.5,403.0 572.5,432.5 570.0,433.0" fill="#10cc14" stroke="#000" stroke-width="0.5" />
<ellipse cx="584.6" cy="400.5" rx="5.7" ry="7.0" fill="#a81010" stroke="#000" stroke-width="0.9" transform="rotate(-10 584.6 400.5)"/>
<polygon points="306.0,223.4 427.0,206.5 437.0,207.5 447.0,214.0 453.0,224.0 452.0,238.0 338.0,254.0 308.0,254.0" fill="#087c0a" stroke="#000" stroke-width="0.9" />
<polygon points="306.0,223.4 427.0,206.5 433.0,208.0 308.0,227.0" fill="#10cc14" stroke="#000" stroke-width="0.5" />
<ellipse cx="435.5" cy="222.6" rx="4.4" ry="5.4" fill="#a81010" stroke="#000" stroke-width="0.9" transform="rotate(-60 435.5 222.6)"/>
<polygon points="305.0,228.0 336.0,240.0 334.0,256.0 305.0,262.0" fill="#0a8c0e" stroke="#000" stroke-width="0.9" />
<polygon points="309.0,232.0 330.0,241.0 312.0,250.0" fill="#10cc14" stroke="#000" stroke-width="0.5" />
<ellipse cx="322.0" cy="239.0" rx="6.0" ry="2.6" fill="#a81010" stroke="#000" stroke-width="0.5" transform="rotate(12 322.0 239.0)"/>
<polygon points="358.6,231.0 367.0,225.1 380.3,225.1 393.7,230.5 358.6,236.0" fill="#10cc14" stroke="#000" stroke-width="0.6" />
<polygon points="338.5,239.3 462.3,222.6 472.0,223.5 479.0,229.0 481.5,238.0 479.5,247.0 474.0,253.0 467.0,255.5 345.2,262.0 337.0,260.0 333.0,255.0 331.8,247.0" fill="#0a8c0e" stroke="#000" stroke-width="0.9" />
<polygon points="338.5,239.3 462.3,222.6 466.0,223.5 343.0,241.5" fill="#10cc14" stroke="#000" stroke-width="0.5" />
<polygon points="331.8,247.0 338.5,239.3 343.0,241.5 339.0,249.0 341.0,261.0 337.0,260.0 333.0,255.0" fill="#10cc14" stroke="#000" stroke-width="0.5" />
<ellipse cx="469.0" cy="240.2" rx="6.4" ry="7.9" fill="#a81010" stroke="#000" stroke-width="0.9" transform="rotate(-10 469.0 240.2)"/>
<polygon points="251.0,248.6 273.8,225.0 287.0,219.0 296.0,224.0 291.5,282.0 260.4,275.0 248.7,263.6" fill="#0a8c0e" stroke="#000" stroke-width="0.9" />
<polygon points="251.0,248.6 273.8,225.0 276.0,227.0 253.5,250.0 251.5,262.5 248.7,263.6" fill="#10cc14" stroke="#000" stroke-width="0.5" />
<polygon points="303.0,224.5 306.5,229.0 306.5,235.0 303.5,277.0 301.0,280.0" fill="#0a8c0e" stroke="#000" stroke-width="0.9" />
<polygon points="296.4,222.7 301.0,222.5 304.0,226.0 305.0,233.0 302.0,277.0 299.0,282.0 294.0,283.0 291.3,280.0 291.0,270.0 294.0,230.0" fill="#10cc14" stroke="#000" stroke-width="0.9" />
<polygon points="256.4,200.1 287.3,236.1 295.3,229.3 264.4,193.3" fill="#0a8c0e" stroke="#000" stroke-width="0.9" />
<polygon points="229.4,227.5 260.3,249.7 265.5,242.3 234.6,220.1" fill="#0a8c0e" stroke="#000" stroke-width="0.9" />
<polygon points="225.0,303.6 263.4,270.2 257.4,263.4 219.0,296.8" fill="#0a8c0e" stroke="#000" stroke-width="0.9" />
<polygon points="219.0,296.8 257.4,263.4 259.4,265.7 221.0,299.1" fill="#10cc14" stroke="#000" stroke-width="0.5" />
<polygon points="247.1,325.0 289.7,276.4 282.9,270.4 240.3,319.0" fill="#0a8c0e" stroke="#000" stroke-width="0.9" />
<polygon points="240.3,319.0 282.9,270.4 285.2,272.4 242.6,321.0" fill="#10cc14" stroke="#000" stroke-width="0.5" />
<polygon points="223.6,218.8 255.4,189.2 263.7,195.9 258.7,206.8 233.6,226.8" fill="#0a8c0e" stroke="#000" stroke-width="0.9" />
<polygon points="213.6,213.5 240.3,185.0 255.4,189.2 223.6,218.8" fill="#10cc14" stroke="#000" stroke-width="0.9" />
<polyline points="219.0,216.0 248.0,187.2" fill="none" stroke="#000" stroke-width="0.5" />
<polygon points="175.1,248.6 228.6,221.0 233.6,226.8 176.0,257.8" fill="#0a8c0e" stroke="#000" stroke-width="0.9" />
<polygon points="156.7,245.2 213.6,213.5 228.6,221.0 175.1,248.6 176.0,257.8 158.4,251.9" fill="#10cc14" stroke="#000" stroke-width="0.9" />
<polyline points="166.0,247.0 221.0,217.5" fill="none" stroke="#000" stroke-width="0.5" />
<polyline points="175.1,248.6 176.0,257.8" fill="none" stroke="#000" stroke-width="0.5" />
<polyline points="166.0,247.0 167.0,255.0" fill="none" stroke="#000" stroke-width="0.5" />
<polygon points="156.7,270.1 218.6,296.9 247.0,318.6 244.5,327.0 223.6,320.3 201.9,297.7 158.4,282.6 152.5,277.6" fill="#0a8c0e" stroke="#000" stroke-width="0.9" />
<polygon points="156.7,270.1 171.0,276.0 169.5,286.5 158.4,282.6 152.5,277.6" fill="#10cc14" stroke="#000" stroke-width="0.9" />
<polyline points="163.0,273.0 161.5,283.5" fill="none" stroke="#000" stroke-width="0.5" />
<polygon points="201.9,297.7 213.6,301.9 238.7,324.4 223.6,320.3" fill="#10cc14" stroke="#000" stroke-width="0.5" />
<ellipse cx="260.4" cy="196.7" rx="4.1" ry="5.1" fill="#a81010" stroke="#000" stroke-width="0.9" transform="rotate(20 260.4 196.7)"/>
<ellipse cx="232.0" cy="223.8" rx="4.1" ry="5.1" fill="#a81010" stroke="#000" stroke-width="0.9" transform="rotate(20 232.0 223.8)"/>
<ellipse cx="262.9" cy="246.0" rx="4.1" ry="5.1" fill="#a81010" stroke="#000" stroke-width="0.9" transform="rotate(20 262.9 246.0)"/>
<ellipse cx="291.3" cy="232.7" rx="4.1" ry="5.1" fill="#a81010" stroke="#000" stroke-width="0.9" transform="rotate(20 291.3 232.7)"/>
<ellipse cx="260.4" cy="266.8" rx="4.1" ry="5.1" fill="#a81010" stroke="#000" stroke-width="0.9" transform="rotate(20 260.4 266.8)"/>
<ellipse cx="286.3" cy="273.4" rx="4.1" ry="5.1" fill="#a81010" stroke="#000" stroke-width="0.9" transform="rotate(20 286.3 273.4)"/>
<ellipse cx="222.0" cy="300.2" rx="4.1" ry="5.1" fill="#a81010" stroke="#000" stroke-width="0.9" transform="rotate(20 222.0 300.2)"/>
<ellipse cx="243.7" cy="322.0" rx="4.1" ry="5.1" fill="#a81010" stroke="#000" stroke-width="0.9" transform="rotate(20 243.7 322.0)"/>
<polygon points="836.0,391.0 830.8,390.0 825.5,389.9 820.5,391.5 815.6,393.7 810.8,395.9 806.0,398.1 801.1,400.3 796.3,402.5 791.4,404.7 786.6,406.9 781.8,409.1 776.9,411.3 772.1,413.5 767.3,415.7 762.4,417.9 757.6,420.1 752.7,422.3 747.9,424.5 743.1,426.7 738.2,428.9 733.4,431.1 728.6,433.2 723.7,435.4 718.9,437.6 714.0,439.8 709.2,442.0 704.4,444.2 699.5,446.4 694.7,448.6 689.8,450.8 685.0,453.0 680.2,455.2 675.3,457.4 670.5,459.6 665.7,461.8 660.8,464.0 656.0,466.2 651.1,468.4 646.3,470.6 641.5,472.8 636.7,475.2 632.0,477.7 627.5,480.4 623.0,483.3 618.6,486.3 614.5,489.7 611.1,493.7 608.5,498.3 606.9,503.4 606.0,508.6 605.8,513.9 606.1,519.2 606.6,524.5 607.3,529.7 608.6,534.9 610.3,539.9 612.6,544.7 615.2,549.3 618.3,553.7 621.5,557.9 624.7,562.2 627.9,566.4 631.1,570.7 634.3,574.9 637.5,579.1 640.7,583.4 643.8,587.6 647.0,591.9 650.2,596.1 653.4,600.4 656.6,604.6 659.8,608.9 663.0,613.1 666.2,617.4 669.4,621.6 672.6,625.9 675.8,630.1 679.0,634.3 682.3,638.5 687.1,640.5 616.0,615.0 614.1,613.3 610.0,609.8 605.9,606.3 601.9,602.8 598.7,598.5 595.5,594.1 592.3,589.8 589.2,585.4 586.3,580.9 583.3,576.4 580.4,571.9 578.0,567.1 575.6,562.3 573.2,557.4 570.8,552.7 567.6,548.3 564.5,543.9 561.3,539.6 558.2,535.2 555.1,530.9 551.9,526.5 548.9,522.0 545.9,517.6 542.8,513.2 541.5,508.1 540.7,502.8 540.0,497.4 539.3,492.1 540.0,486.9 541.6,481.8 543.3,476.7 544.9,471.5 546.5,466.4 549.8,462.2 553.6,458.4 557.4,454.6 561.2,450.9 566.0,448.7 570.8,446.4 575.6,444.2 580.4,441.9 585.2,439.6 590.0,437.4 594.8,435.1 599.6,432.9 604.3,430.6 609.1,428.4 613.9,426.1 618.7,423.9 623.5,421.6 628.3,419.4 633.1,417.1 637.9,414.9 642.7,412.6 647.5,410.4 652.3,408.1 657.1,405.9 661.9,403.6 666.7,401.4 671.5,399.1 676.3,396.9 681.1,394.6 685.8,392.4 690.6,390.1 695.4,387.9 700.2,385.6 705.0,383.4 709.8,381.1 714.6,378.8 719.4,376.6 724.2,374.3 729.0,372.1 733.8,369.8 738.6,367.6 743.4,365.3 748.2,363.1 753.0,360.8 757.8,358.6 762.8,357.1 768.0,356.0" fill="#6e4204" stroke="#000" stroke-width="0" />
<polygon points="836.0,391.0 830.4,382.9 762.4,350.2 768.0,356.0" fill="#8e580c" stroke="#000" stroke-width="0.9" />
<polygon points="825.6,382.8 820.5,391.5 752.9,360.8 757.8,351.5" fill="#8e580c" stroke="#000" stroke-width="0.9" />
<polyline points="823.0,387.2 755.3,355.8" fill="none" stroke="#000" stroke-width="0.8" stroke-dasharray="2.5 1.8"/>
<polygon points="830.4,382.9 825.6,382.8 757.8,351.5 762.4,350.2" fill="#9c6414" stroke="#000" stroke-width="0.9" />
<polygon points="768.0,356.0 762.4,350.2 757.8,351.5 752.9,360.8" fill="#7a4a06" stroke="#000" stroke-width="0.6" />
<polygon points="818.1,392.6 810.1,388.5 742.7,357.9 750.6,361.9" fill="#8e580c" stroke="#000" stroke-width="0.9" />
<polygon points="805.7,390.5 803.6,399.2 736.2,368.7 738.3,360.0" fill="#8e580c" stroke="#000" stroke-width="0.9" />
<polyline points="804.7,394.8 737.2,364.3" fill="none" stroke="#000" stroke-width="0.8" stroke-dasharray="2.5 1.8"/>
<polygon points="810.1,388.5 805.7,390.5 738.3,360.0 742.7,357.9" fill="#9c6414" stroke="#000" stroke-width="0.9" />
<polygon points="750.6,361.9 742.7,357.9 738.3,360.0 736.2,368.7" fill="#7a4a06" stroke="#000" stroke-width="0.6" />
<polygon points="801.2,400.3 793.2,396.2 725.9,365.8 733.9,369.8" fill="#8e580c" stroke="#000" stroke-width="0.9" />
<polygon points="788.8,398.2 786.7,406.9 719.5,376.6 721.6,367.8" fill="#8e580c" stroke="#000" stroke-width="0.9" />
<polyline points="787.8,402.5 720.5,372.2" fill="none" stroke="#000" stroke-width="0.8" stroke-dasharray="2.5 1.8"/>
<polygon points="793.2,396.2 788.8,398.2 721.6,367.8 725.9,365.8" fill="#9c6414" stroke="#000" stroke-width="0.9" />
<polygon points="733.9,369.8 725.9,365.8 721.6,367.8 719.5,376.6" fill="#7a4a06" stroke="#000" stroke-width="0.6" />
<polygon points="784.3,407.9 776.3,403.9 709.2,373.7 717.1,377.7" fill="#8e580c" stroke="#000" stroke-width="0.9" />
<polygon points="772.0,405.9 769.8,414.5 702.7,384.4 704.9,375.7" fill="#8e580c" stroke="#000" stroke-width="0.9" />
<polyline points="770.9,410.2 703.8,380.0" fill="none" stroke="#000" stroke-width="0.8" stroke-dasharray="2.5 1.8"/>
<polygon points="776.3,403.9 772.0,405.9 704.9,375.7 709.2,373.7" fill="#9c6414" stroke="#000" stroke-width="0.9" />
<polygon points="717.1,377.7 709.2,373.7 704.9,375.7 702.7,384.4" fill="#7a4a06" stroke="#000" stroke-width="0.6" />
<polygon points="767.4,415.6 759.4,411.5 692.5,381.5 700.4,385.5" fill="#8e580c" stroke="#000" stroke-width="0.9" />
<polygon points="755.1,413.5 752.9,422.2 686.0,392.3 688.1,383.6" fill="#8e580c" stroke="#000" stroke-width="0.9" />
<polyline points="754.0,417.9 687.0,387.9" fill="none" stroke="#000" stroke-width="0.8" stroke-dasharray="2.5 1.8"/>
<polygon points="759.4,411.5 755.1,413.5 688.1,383.6 692.5,381.5" fill="#9c6414" stroke="#000" stroke-width="0.9" />
<polygon points="700.4,385.5 692.5,381.5 688.1,383.6 686.0,392.3" fill="#7a4a06" stroke="#000" stroke-width="0.6" />
<polygon points="750.5,423.3 742.6,419.2 675.7,389.4 683.6,393.4" fill="#8e580c" stroke="#000" stroke-width="0.9" />
<polygon points="738.2,421.2 736.0,429.9 669.2,400.2 671.4,391.4" fill="#8e580c" stroke="#000" stroke-width="0.9" />
<polyline points="737.1,425.5 670.3,395.8" fill="none" stroke="#000" stroke-width="0.8" stroke-dasharray="2.5 1.8"/>
<polygon points="742.6,419.2 738.2,421.2 671.4,391.4 675.7,389.4" fill="#9c6414" stroke="#000" stroke-width="0.9" />
<polygon points="683.6,393.4 675.7,389.4 671.4,391.4 669.2,400.2" fill="#7a4a06" stroke="#000" stroke-width="0.6" />
<polygon points="733.6,430.9 725.7,426.9 659.0,397.2 666.9,401.3" fill="#8e580c" stroke="#000" stroke-width="0.9" />
<polygon points="721.3,428.9 719.1,437.5 652.5,408.0 654.6,399.3" fill="#8e580c" stroke="#000" stroke-width="0.9" />
<polyline points="720.2,433.2 653.5,403.6" fill="none" stroke="#000" stroke-width="0.8" stroke-dasharray="2.5 1.8"/>
<polygon points="725.7,426.9 721.3,428.9 654.6,399.3 659.0,397.2" fill="#9c6414" stroke="#000" stroke-width="0.9" />
<polygon points="666.9,401.3 659.0,397.2 654.6,399.3 652.5,408.0" fill="#7a4a06" stroke="#000" stroke-width="0.6" />
<polygon points="716.7,438.6 708.8,434.5 642.2,405.1 650.2,409.1" fill="#8e580c" stroke="#000" stroke-width="0.9" />
<polygon points="704.4,436.5 702.2,445.2 635.8,415.9 637.9,407.2" fill="#8e580c" stroke="#000" stroke-width="0.9" />
<polyline points="703.3,440.9 636.8,411.5" fill="none" stroke="#000" stroke-width="0.8" stroke-dasharray="2.5 1.8"/>
<polygon points="708.8,434.5 704.4,436.5 637.9,407.2 642.2,405.1" fill="#9c6414" stroke="#000" stroke-width="0.9" />
<polygon points="650.2,409.1 642.2,405.1 637.9,407.2 635.8,415.9" fill="#7a4a06" stroke="#000" stroke-width="0.6" />
<polygon points="699.8,446.3 691.9,442.2 625.5,413.0 633.4,417.0" fill="#8e580c" stroke="#000" stroke-width="0.9" />
<polygon points="687.5,444.2 685.3,452.9 619.0,423.7 621.2,415.0" fill="#8e580c" stroke="#000" stroke-width="0.9" />
<polyline points="686.4,448.5 620.1,419.4" fill="none" stroke="#000" stroke-width="0.8" stroke-dasharray="2.5 1.8"/>
<polygon points="691.9,442.2 687.5,444.2 621.2,415.0 625.5,413.0" fill="#9c6414" stroke="#000" stroke-width="0.9" />
<polygon points="633.4,417.0 625.5,413.0 621.2,415.0 619.0,423.7" fill="#7a4a06" stroke="#000" stroke-width="0.6" />
<polygon points="682.9,454.0 675.0,449.9 608.8,420.8 616.7,424.8" fill="#8e580c" stroke="#000" stroke-width="0.9" />
<polygon points="670.6,451.9 668.4,460.6 602.3,431.6 604.4,422.9" fill="#8e580c" stroke="#000" stroke-width="0.9" />
<polyline points="669.5,456.2 603.3,427.2" fill="none" stroke="#000" stroke-width="0.8" stroke-dasharray="2.5 1.8"/>
<polygon points="675.0,449.9 670.6,451.9 604.4,422.9 608.8,420.8" fill="#9c6414" stroke="#000" stroke-width="0.9" />
<polygon points="616.7,424.8 608.8,420.8 604.4,422.9 602.3,431.6" fill="#7a4a06" stroke="#000" stroke-width="0.6" />
<polygon points="666.0,461.6 658.1,457.6 592.0,428.7 599.9,432.7" fill="#8e580c" stroke="#000" stroke-width="0.9" />
<polygon points="653.7,459.6 651.5,468.2 585.5,439.5 587.7,430.7" fill="#8e580c" stroke="#000" stroke-width="0.9" />
<polyline points="652.6,463.9 586.6,435.1" fill="none" stroke="#000" stroke-width="0.8" stroke-dasharray="2.5 1.8"/>
<polygon points="658.1,457.6 653.7,459.6 587.7,430.7 592.0,428.7" fill="#9c6414" stroke="#000" stroke-width="0.9" />
<polygon points="599.9,432.7 592.0,428.7 587.7,430.7 585.5,439.5" fill="#7a4a06" stroke="#000" stroke-width="0.6" />
<polygon points="649.2,469.3 641.1,465.3 575.2,436.6 583.2,440.6" fill="#8e580c" stroke="#000" stroke-width="0.9" />
<polygon points="636.7,467.3 634.7,476.2 568.8,447.3 570.8,438.7" fill="#8e580c" stroke="#000" stroke-width="0.9" />
<polyline points="635.7,471.7 569.8,443.1" fill="none" stroke="#000" stroke-width="0.8" stroke-dasharray="2.5 1.8"/>
<polygon points="641.1,465.3 636.7,467.3 570.8,438.7 575.2,436.6" fill="#9c6414" stroke="#000" stroke-width="0.9" />
<polygon points="583.2,440.6 575.2,436.6 570.8,438.7 568.8,447.3" fill="#7a4a06" stroke="#000" stroke-width="0.6" />
<polygon points="632.5,477.4 623.9,474.3 557.7,444.9 566.5,448.4" fill="#8e580c" stroke="#000" stroke-width="0.9" />
<polygon points="619.9,476.9 619.0,486.0 553.9,458.1 554.1,448.2" fill="#8e580c" stroke="#000" stroke-width="0.9" />
<polyline points="619.5,481.5 553.7,452.7" fill="none" stroke="#000" stroke-width="0.8" stroke-dasharray="2.5 1.8"/>
<polygon points="623.9,474.3 619.9,476.9 554.1,448.2 557.7,444.9" fill="#9c6414" stroke="#000" stroke-width="0.9" />
<polygon points="566.5,448.4 557.7,444.9 554.1,448.2 553.9,458.1" fill="#7a4a06" stroke="#000" stroke-width="0.6" />
<polygon points="616.9,487.5 607.1,487.4 542.3,460.0 552.1,459.9" fill="#8e580c" stroke="#000" stroke-width="0.9" />
<polygon points="604.2,491.3 607.7,500.3 544.3,473.6 540.2,464.3" fill="#8e580c" stroke="#000" stroke-width="0.9" />
<polyline points="605.9,495.8 541.9,468.8" fill="none" stroke="#000" stroke-width="0.8" stroke-dasharray="2.5 1.8"/>
<polygon points="607.1,487.4 604.2,491.3 540.2,464.3 542.3,460.0" fill="#9c6414" stroke="#000" stroke-width="0.9" />
<polygon points="552.1,459.9 542.3,460.0 540.2,464.3 544.3,473.6" fill="#7a4a06" stroke="#000" stroke-width="0.6" />
<polygon points="607.0,502.8 599.1,507.7 534.8,480.9 543.5,476.1" fill="#8e580c" stroke="#000" stroke-width="0.9" />
<polygon points="598.8,512.5 606.0,518.6 539.2,491.5 533.3,485.6" fill="#8e580c" stroke="#000" stroke-width="0.9" />
<polyline points="602.4,515.6 536.9,488.6" fill="none" stroke="#000" stroke-width="0.8" stroke-dasharray="2.5 1.8"/>
<polygon points="599.1,507.7 598.8,512.5 533.3,485.6 534.8,480.9" fill="#9c6414" stroke="#000" stroke-width="0.9" />
<polygon points="543.5,476.1 534.8,480.9 533.3,485.6 539.2,491.5" fill="#7a4a06" stroke="#000" stroke-width="0.6" />
<polygon points="606.3,521.2 600.0,528.0 533.4,501.0 539.6,494.1" fill="#8e580c" stroke="#000" stroke-width="0.9" />
<polygon points="600.9,532.7 609.2,536.8 541.7,510.1 534.1,505.8" fill="#8e580c" stroke="#000" stroke-width="0.9" />
<polyline points="605.0,534.8 538.3,507.9" fill="none" stroke="#000" stroke-width="0.8" stroke-dasharray="2.5 1.8"/>
<polygon points="600.0,528.0 600.9,532.7 534.1,505.8 533.4,501.0" fill="#9c6414" stroke="#000" stroke-width="0.9" />
<polygon points="539.6,494.1 533.4,501.0 534.1,505.8 541.7,510.1" fill="#7a4a06" stroke="#000" stroke-width="0.6" />
<polygon points="610.1,539.3 606.3,547.9 539.6,520.8 542.4,512.6" fill="#8e580c" stroke="#000" stroke-width="0.9" />
<polygon points="608.7,552.1 617.9,553.1 551.6,525.9 542.3,524.8" fill="#8e580c" stroke="#000" stroke-width="0.9" />
<polyline points="613.3,552.6 546.9,525.3" fill="none" stroke="#000" stroke-width="0.8" stroke-dasharray="2.5 1.8"/>
<polygon points="606.3,547.9 608.7,552.1 542.3,524.8 539.6,520.8" fill="#9c6414" stroke="#000" stroke-width="0.9" />
<polygon points="542.4,512.6 539.6,520.8 542.3,524.8 551.6,525.9" fill="#7a4a06" stroke="#000" stroke-width="0.6" />
<polygon points="619.4,555.2 617.2,563.9 550.7,536.9 553.1,528.1" fill="#8e580c" stroke="#000" stroke-width="0.9" />
<polygon points="620.1,567.7 629.0,568.0 562.5,541.2 553.6,540.8" fill="#8e580c" stroke="#000" stroke-width="0.9" />
<polyline points="624.6,567.8 558.1,540.9" fill="none" stroke="#000" stroke-width="0.8" stroke-dasharray="2.5 1.8"/>
<polygon points="617.2,563.9 620.1,567.7 553.6,540.8 550.7,536.9" fill="#9c6414" stroke="#000" stroke-width="0.9" />
<polygon points="553.1,528.1 550.7,536.9 553.6,540.8 562.5,541.2" fill="#7a4a06" stroke="#000" stroke-width="0.6" />
<polygon points="630.6,570.0 628.4,578.7 561.7,552.1 564.0,543.3" fill="#8e580c" stroke="#000" stroke-width="0.9" />
<polygon points="631.3,582.5 640.2,582.8 572.9,556.8 564.6,556.0" fill="#8e580c" stroke="#000" stroke-width="0.9" />
<polyline points="635.7,582.7 569.0,556.2" fill="none" stroke="#000" stroke-width="0.8" stroke-dasharray="2.5 1.8"/>
<polygon points="628.4,578.7 631.3,582.5 564.6,556.0 561.7,552.1" fill="#9c6414" stroke="#000" stroke-width="0.9" />
<polygon points="564.0,543.3 561.7,552.1 564.6,556.0 572.9,556.8" fill="#7a4a06" stroke="#000" stroke-width="0.6" />
<polygon points="641.8,584.9 639.5,593.5 571.0,568.4 574.1,559.1" fill="#8e580c" stroke="#000" stroke-width="0.9" />
<polygon points="642.4,597.4 651.4,597.6 581.3,573.5 573.2,572.7" fill="#8e580c" stroke="#000" stroke-width="0.9" />
<polyline points="646.9,597.5 577.6,572.8" fill="none" stroke="#000" stroke-width="0.8" stroke-dasharray="2.5 1.8"/>
<polygon points="639.5,593.5 642.4,597.4 573.2,572.7 571.0,568.4" fill="#9c6414" stroke="#000" stroke-width="0.9" />
<polygon points="574.1,559.1 571.0,568.4 573.2,572.7 581.3,573.5" fill="#7a4a06" stroke="#000" stroke-width="0.6" />
<polygon points="652.9,599.7 650.7,608.3 580.3,584.6 582.8,575.7" fill="#8e580c" stroke="#000" stroke-width="0.9" />
<polygon points="653.6,612.2 662.5,612.4 591.8,589.1 583.0,588.7" fill="#8e580c" stroke="#000" stroke-width="0.9" />
<polyline points="658.0,612.3 587.5,588.8" fill="none" stroke="#000" stroke-width="0.8" stroke-dasharray="2.5 1.8"/>
<polygon points="650.7,608.3 653.6,612.2 583.0,588.7 580.3,584.6" fill="#9c6414" stroke="#000" stroke-width="0.9" />
<polygon points="582.8,575.7 580.3,584.6 583.0,588.7 591.8,589.1" fill="#7a4a06" stroke="#000" stroke-width="0.6" />
<polygon points="664.1,614.5 661.8,623.2 591.1,600.0 593.4,591.2" fill="#8e580c" stroke="#000" stroke-width="0.9" />
<polygon points="664.7,627.0 673.7,627.3 603.2,604.0 594.0,603.9" fill="#8e580c" stroke="#000" stroke-width="0.9" />
<polyline points="669.2,627.1 598.5,604.0" fill="none" stroke="#000" stroke-width="0.8" stroke-dasharray="2.5 1.8"/>
<polygon points="661.8,623.2 664.7,627.0 594.0,603.9 591.1,600.0" fill="#9c6414" stroke="#000" stroke-width="0.9" />
<polygon points="593.4,591.2 591.1,600.0 594.0,603.9 603.2,604.0" fill="#7a4a06" stroke="#000" stroke-width="0.6" />
<polygon points="675.2,629.3 673.4,638.5 604.3,614.1 605.2,605.7" fill="#8e580c" stroke="#000" stroke-width="0.9" />
<polygon points="676.4,642.3 686.2,640.4 616.0,615.0 608.0,617.3" fill="#8e580c" stroke="#000" stroke-width="0.9" />
<polyline points="681.3,641.4 612.9,616.3" fill="none" stroke="#000" stroke-width="0.8" stroke-dasharray="2.5 1.8"/>
<polygon points="673.4,638.5 676.4,642.3 608.0,617.3 604.3,614.1" fill="#9c6414" stroke="#000" stroke-width="0.9" />
<polygon points="605.2,605.7 604.3,614.1 608.0,617.3 616.0,615.0" fill="#7a4a06" stroke="#000" stroke-width="0.6" />
<polygon points="820.0,397.0 844.0,397.0 940.0,560.0 942.0,580.0 930.0,608.0 897.0,560.0" fill="#965800" stroke="#000" stroke-width="0.9" />
<polygon points="684.0,640.0 928.0,616.0 942.0,588.0 905.0,570.0 640.0,600.0" fill="#925600" stroke="#000" stroke-width="0.9" />
<polygon points="636.0,484.0 808.0,404.0 818.0,420.0 770.0,520.0 700.0,566.0 650.0,566.0" fill="#989800" stroke="#000" stroke-width="0.9" />
<polygon points="640.0,540.0 760.0,530.0 850.0,545.0 840.0,575.0 660.0,580.0" fill="#8a0808" stroke="#000" stroke-width="0" />
<ellipse cx="708.0" cy="458.0" rx="9.0" ry="15.0" fill="#8a5808" stroke="#000" stroke-width="0.9" transform="rotate(15 708.0 458.0)"/>
<ellipse cx="711.0" cy="458.0" rx="6.0" ry="11.0" fill="#6a4200" stroke="#000" stroke-width="0.5" transform="rotate(15 711.0 458.0)"/>
<polygon points="731.0,437.0 775.0,414.0 790.0,450.0 765.0,476.0 738.0,458.0" fill="#e830e8" stroke="#000" stroke-width="0.6" />
<polyline points="732.0,437.0 776.0,415.0" fill="none" stroke="#701080" stroke-width="0.5" />
<polyline points="732.9,440.0 776.9,418.0" fill="none" stroke="#701080" stroke-width="0.5" />
<polyline points="733.8,443.0 777.8,421.0" fill="none" stroke="#701080" stroke-width="0.5" />
<polyline points="734.7,446.0 778.7,424.0" fill="none" stroke="#701080" stroke-width="0.5" />
<polyline points="735.6,449.0 779.6,427.0" fill="none" stroke="#701080" stroke-width="0.5" />
<polyline points="736.5,452.0 780.5,430.0" fill="none" stroke="#701080" stroke-width="0.5" />
<polyline points="737.4,455.0 781.4,433.0" fill="none" stroke="#701080" stroke-width="0.5" />
<polyline points="738.3,458.0 782.3,436.0" fill="none" stroke="#701080" stroke-width="0.5" />
<polyline points="739.2,461.0 783.2,439.0" fill="none" stroke="#701080" stroke-width="0.5" />
<polyline points="740.1,464.0 784.1,442.0" fill="none" stroke="#701080" stroke-width="0.5" />
<polyline points="741.0,467.0 785.0,445.0" fill="none" stroke="#701080" stroke-width="0.5" />
<polyline points="741.9,470.0 785.9,448.0" fill="none" stroke="#701080" stroke-width="0.5" />
<polygon points="826.0,427.0 822.9,430.6 825.0,435.0 821.1,437.7 822.1,442.5 817.7,444.0 817.5,448.9 812.9,449.1 811.5,453.8 807.0,452.8 804.5,456.9 800.4,454.7 797.0,458.0 793.6,454.7 789.5,456.9 787.0,452.8 782.5,453.8 781.1,449.1 776.5,448.9 776.3,444.0 771.9,442.5 772.9,437.7 769.0,435.0 771.1,430.6 768.0,427.0 771.1,423.4 769.0,419.0 772.9,416.3 771.9,411.5 776.3,410.0 776.5,405.1 781.1,404.9 782.5,400.2 787.0,401.2 789.5,397.1 793.6,399.3 797.0,396.0 800.4,399.3 804.5,397.1 807.0,401.2 811.5,400.2 812.9,404.9 817.5,405.1 817.7,410.0 822.1,411.5 821.1,416.3 825.0,419.0 822.9,423.4" fill="#8e0890" stroke="#000" stroke-width="0.5" />
<ellipse cx="798.0" cy="428.0" rx="22.0" ry="24.0" fill="#e830e8" stroke="#000" stroke-width="0.5"/>
<polyline points="777.0,428.0 819.0,428.0" fill="none" stroke="#701080" stroke-width="1.3" />
<polyline points="779.8,416.5 816.2,439.5" fill="none" stroke="#701080" stroke-width="1.3" />
<polyline points="787.5,408.1 808.5,447.9" fill="none" stroke="#701080" stroke-width="1.3" />
<polyline points="798.0,405.0 798.0,451.0" fill="none" stroke="#701080" stroke-width="1.3" />
<polyline points="808.5,408.1 787.5,447.9" fill="none" stroke="#701080" stroke-width="1.3" />
<polyline points="816.2,416.5 779.8,439.5" fill="none" stroke="#701080" stroke-width="1.3" />
<polygon points="730.0,468.0 735.0,462.0 760.0,473.0 757.0,481.0" fill="#30e030" stroke="#000" stroke-width="0.6" />
<polygon points="722.0,446.0 734.0,436.0 745.0,444.0 702.0,530.0 680.0,532.0 690.0,505.0" fill="#bc0808" stroke="#000" stroke-width="0.9" />
<polyline points="735.0,445.0 694.0,528.0" fill="none" stroke="#000" stroke-width="0.5" />
<polygon points="745.0,444.0 756.0,450.0 715.0,530.0 700.0,528.0" fill="#de0c0c" stroke="#000" stroke-width="0.9" />
<ellipse cx="728.0" cy="508.0" rx="13.0" ry="10.0" fill="#10d014" stroke="#000" stroke-width="0.9" transform="rotate(-20 728.0 508.0)"/>
<ellipse cx="728.0" cy="508.0" rx="9.0" ry="6.5" fill="#0a8c0e" stroke="#000" stroke-width="0.5" transform="rotate(-20 728.0 508.0)"/>
<polygon points="647.0,478.0 668.0,470.0 682.0,492.0 696.0,522.0 690.0,540.0 662.0,556.0 640.0,553.0 626.0,545.0 640.0,520.0" fill="#de0c0c" stroke="#000" stroke-width="0.9" />
<polygon points="668.0,470.0 682.0,492.0 696.0,522.0 685.0,530.0 665.0,495.0 660.0,476.0" fill="#960404" stroke="#000" stroke-width="0.6" />
<polygon points="680.0,527.0 695.0,522.0 708.0,556.0 694.0,562.0" fill="#bc0808" stroke="#000" stroke-width="0.9" />
<polygon points="660.0,548.0 690.0,560.0 700.0,575.0 665.0,572.0" fill="#de0c0c" stroke="#000" stroke-width="0.9" />
<ellipse cx="636.0" cy="510.0" rx="19.0" ry="31.0" fill="#10d014" stroke="#000" stroke-width="0.9" transform="rotate(14 636.0 510.0)"/>
<polyline points="618.0,510.0 654.0,510.0" fill="none" stroke="#000" stroke-width="0.6" transform="rotate(14 636 510)"/>
<polyline points="621.4,492.4 650.6,527.6" fill="none" stroke="#000" stroke-width="0.6" transform="rotate(14 636 510)"/>
<polyline points="630.4,481.5 641.6,538.5" fill="none" stroke="#000" stroke-width="0.6" transform="rotate(14 636 510)"/>
<polyline points="641.6,481.5 630.4,538.5" fill="none" stroke="#000" stroke-width="0.6" transform="rotate(14 636 510)"/>
<polyline points="650.6,492.4 621.4,527.6" fill="none" stroke="#000" stroke-width="0.6" transform="rotate(14 636 510)"/>
<ellipse cx="631.0" cy="508.0" rx="6.0" ry="7.0" fill="#de0c0c" stroke="#000" stroke-width="0.9" transform="rotate(14 631.0 508.0)"/>
<ellipse cx="630.0" cy="508.0" rx="3.2" ry="4.0" fill="#b00808" stroke="#000" stroke-width="0.5" transform="rotate(14 630.0 508.0)"/>
<ellipse cx="655.0" cy="541.0" rx="7.0" ry="8.0" fill="#10d014" stroke="#000" stroke-width="0.9"/>
<ellipse cx="656.5" cy="541.0" rx="3.6" ry="4.4" fill="#0a8c0e" stroke="#000" stroke-width="0.5"/>
<polygon points="745.0,547.0 836.0,537.0 842.0,545.0 840.0,562.0 748.0,571.0" fill="#960404" stroke="#000" stroke-width="0.9" />
<ellipse cx="840.0" cy="550.0" rx="4.0" ry="12.0" fill="#bc0808" stroke="#000" stroke-width="0.6" transform="rotate(-5 840.0 550.0)"/>
<polygon points="762.0,525.0 852.0,517.0 884.0,532.0 750.0,541.0" fill="#de0c0c" stroke="#000" stroke-width="0.9" />
<polyline points="755.0,533.0 870.0,525.0" fill="none" stroke="#000" stroke-width="0.5" />
<polygon points="645.0,570.0 660.0,555.0 715.0,552.0 690.0,592.0 670.0,590.0" fill="#8e0890" stroke="#000" stroke-width="0.9" />
<ellipse cx="651.0" cy="565.0" rx="8.0" ry="5.0" fill="#10d014" stroke="#000" stroke-width="0.9" transform="rotate(-30 651.0 565.0)"/>
<polygon points="665.0,577.0 680.0,569.0 703.0,572.0 682.0,612.0 670.0,610.0" fill="#808080" stroke="#000" stroke-width="0.5" />
<ellipse cx="795.0" cy="582.0" rx="15.0" ry="11.0" fill="#10d014" stroke="#000" stroke-width="0.9" transform="rotate(-15 795.0 582.0)"/>
<ellipse cx="795.0" cy="582.0" rx="11.7" ry="8.8" fill="#18a818" stroke="#000" stroke-width="0.5" transform="rotate(-15 795.0 582.0)"/>
<polyline points="783.3,582.0 806.7,582.0" fill="none" stroke="#22d022" stroke-width="1.6" transform="rotate(-15 795 582)"/>
<polyline points="784.9,577.6 805.1,586.4" fill="none" stroke="#22d022" stroke-width="1.6" transform="rotate(-15 795 582)"/>
<polyline points="789.1,574.4 800.9,589.6" fill="none" stroke="#22d022" stroke-width="1.6" transform="rotate(-15 795 582)"/>
<polyline points="795.0,573.2 795.0,590.8" fill="none" stroke="#22d022" stroke-width="1.6" transform="rotate(-15 795 582)"/>
<polyline points="800.9,574.4 789.1,589.6" fill="none" stroke="#22d022" stroke-width="1.6" transform="rotate(-15 795 582)"/>
<polyline points="805.1,577.6 784.9,586.4" fill="none" stroke="#22d022" stroke-width="1.6" transform="rotate(-15 795 582)"/>
<ellipse cx="795.0" cy="582.0" rx="4.5" ry="3.3" fill="#10d014" stroke="#000" stroke-width="0.5" transform="rotate(-15 795.0 582.0)"/>
<ellipse cx="692.5" cy="602.5" rx="17.0" ry="25.0" fill="#10d014" stroke="#000" stroke-width="0.9" transform="rotate(12 692.5 602.5)"/>
<ellipse cx="692.5" cy="602.5" rx="13.3" ry="20.0" fill="#18a818" stroke="#000" stroke-width="0.5" transform="rotate(12 692.5 602.5)"/>
<polyline points="679.2,602.5 705.8,602.5" fill="none" stroke="#22d022" stroke-width="1.6" transform="rotate(12 692.5 602.5)"/>
<polyline points="681.0,592.5 704.0,612.5" fill="none" stroke="#22d022" stroke-width="1.6" transform="rotate(12 692.5 602.5)"/>
<polyline points="685.9,585.2 699.1,619.8" fill="none" stroke="#22d022" stroke-width="1.6" transform="rotate(12 692.5 602.5)"/>
<polyline points="692.5,582.5 692.5,622.5" fill="none" stroke="#22d022" stroke-width="1.6" transform="rotate(12 692.5 602.5)"/>
<polyline points="699.1,585.2 685.9,619.8" fill="none" stroke="#22d022" stroke-width="1.6" transform="rotate(12 692.5 602.5)"/>
<polyline points="704.0,592.5 681.0,612.5" fill="none" stroke="#22d022" stroke-width="1.6" transform="rotate(12 692.5 602.5)"/>
<ellipse cx="692.5" cy="602.5" rx="5.1" ry="7.5" fill="#10d014" stroke="#000" stroke-width="0.5" transform="rotate(12 692.5 602.5)"/>
<ellipse cx="763.7" cy="595.0" rx="18.0" ry="25.0" fill="#10d014" stroke="#000" stroke-width="0.9" transform="rotate(12 763.7 595.0)"/>
<ellipse cx="763.7" cy="595.0" rx="14.0" ry="20.0" fill="#18a818" stroke="#000" stroke-width="0.5" transform="rotate(12 763.7 595.0)"/>
<polyline points="749.7,595.0 777.7,595.0" fill="none" stroke="#22d022" stroke-width="1.6" transform="rotate(12 763.7 595)"/>
<polyline points="751.5,585.0 775.9,605.0" fill="none" stroke="#22d022" stroke-width="1.6" transform="rotate(12 763.7 595)"/>
<polyline points="756.7,577.7 770.7,612.3" fill="none" stroke="#22d022" stroke-width="1.6" transform="rotate(12 763.7 595)"/>
<polyline points="763.7,575.0 763.7,615.0" fill="none" stroke="#22d022" stroke-width="1.6" transform="rotate(12 763.7 595)"/>
<polyline points="770.7,577.7 756.7,612.3" fill="none" stroke="#22d022" stroke-width="1.6" transform="rotate(12 763.7 595)"/>
<polyline points="775.9,585.0 751.5,605.0" fill="none" stroke="#22d022" stroke-width="1.6" transform="rotate(12 763.7 595)"/>
<ellipse cx="763.7" cy="595.0" rx="5.4" ry="7.5" fill="#10d014" stroke="#000" stroke-width="0.5" transform="rotate(12 763.7 595.0)"/>
<polygon points="715.0,552.5 740.0,557.5 773.0,588.0 770.0,605.0 700.0,613.0 688.0,603.0 690.0,592.0" fill="#8e0890" stroke="#000" stroke-width="0.9" />
<polygon points="690.0,592.0 715.0,552.5 720.0,553.5 695.0,594.0" fill="#b040c0" stroke="#000" stroke-width="0.5" />
<ellipse cx="722.0" cy="560.0" rx="7.0" ry="7.0" fill="#e830e8" stroke="#000" stroke-width="0.5"/>
<ellipse cx="737.5" cy="570.0" rx="5.5" ry="6.3" fill="#10d014" stroke="#000" stroke-width="0.9"/>
<ellipse cx="738.7" cy="570.0" rx="3.0" ry="3.6" fill="#0a8c0e" stroke="#000" stroke-width="0.5"/>
<ellipse cx="700.0" cy="604.0" rx="5.5" ry="6.3" fill="#10d014" stroke="#000" stroke-width="0.9"/>
<ellipse cx="701.2" cy="604.0" rx="3.0" ry="3.6" fill="#0a8c0e" stroke="#000" stroke-width="0.5"/>
<ellipse cx="769.0" cy="597.5" rx="5.5" ry="6.3" fill="#10d014" stroke="#000" stroke-width="0.9"/>
<ellipse cx="770.2" cy="597.5" rx="3.0" ry="3.6" fill="#0a8c0e" stroke="#000" stroke-width="0.5"/>
<polygon points="842.0,580.0 865.0,542.0 880.0,540.0 850.0,560.0" fill="#a838b8" stroke="#000" stroke-width="0.6" />
<polygon points="815.0,577.0 830.0,562.0 852.0,560.0 832.0,610.0 818.0,600.0" fill="#808080" stroke="#000" stroke-width="0.5" />
<ellipse cx="845.0" cy="587.5" rx="15.0" ry="25.0" fill="#10d014" stroke="#000" stroke-width="0.9" transform="rotate(12 845.0 587.5)"/>
<ellipse cx="845.0" cy="587.5" rx="11.7" ry="20.0" fill="#18a818" stroke="#000" stroke-width="0.5" transform="rotate(12 845.0 587.5)"/>
<polyline points="833.3,587.5 856.7,587.5" fill="none" stroke="#22d022" stroke-width="1.6" transform="rotate(12 845 587.5)"/>
<polyline points="834.9,577.5 855.1,597.5" fill="none" stroke="#22d022" stroke-width="1.6" transform="rotate(12 845 587.5)"/>
<polyline points="839.1,570.2 850.9,604.8" fill="none" stroke="#22d022" stroke-width="1.6" transform="rotate(12 845 587.5)"/>
<polyline points="845.0,567.5 845.0,607.5" fill="none" stroke="#22d022" stroke-width="1.6" transform="rotate(12 845 587.5)"/>
<polyline points="850.9,570.2 839.1,604.8" fill="none" stroke="#22d022" stroke-width="1.6" transform="rotate(12 845 587.5)"/>
<polyline points="855.1,577.5 834.9,597.5" fill="none" stroke="#22d022" stroke-width="1.6" transform="rotate(12 845 587.5)"/>
<ellipse cx="845.0" cy="587.5" rx="4.5" ry="7.5" fill="#10d014" stroke="#000" stroke-width="0.5" transform="rotate(12 845.0 587.5)"/>
<ellipse cx="920.0" cy="582.5" rx="18.0" ry="26.0" fill="#10d014" stroke="#000" stroke-width="0.9" transform="rotate(12 920.0 582.5)"/>
<ellipse cx="920.0" cy="582.5" rx="14.0" ry="20.8" fill="#18a818" stroke="#000" stroke-width="0.5" transform="rotate(12 920.0 582.5)"/>
<polyline points="906.0,582.5 934.0,582.5" fill="none" stroke="#22d022" stroke-width="1.6" transform="rotate(12 920 582.5)"/>
<polyline points="907.8,572.1 932.2,592.9" fill="none" stroke="#22d022" stroke-width="1.6" transform="rotate(12 920 582.5)"/>
<polyline points="913.0,564.5 927.0,600.5" fill="none" stroke="#22d022" stroke-width="1.6" transform="rotate(12 920 582.5)"/>
<polyline points="920.0,561.7 920.0,603.3" fill="none" stroke="#22d022" stroke-width="1.6" transform="rotate(12 920 582.5)"/>
<polyline points="927.0,564.5 913.0,600.5" fill="none" stroke="#22d022" stroke-width="1.6" transform="rotate(12 920 582.5)"/>
<polyline points="932.2,572.1 907.8,592.9" fill="none" stroke="#22d022" stroke-width="1.6" transform="rotate(12 920 582.5)"/>
<ellipse cx="920.0" cy="582.5" rx="5.4" ry="7.8" fill="#10d014" stroke="#000" stroke-width="0.5" transform="rotate(12 920.0 582.5)"/>
<polygon points="865.0,542.5 892.5,543.7 930.0,580.0 925.0,592.5 852.5,602.5 840.0,592.5 842.5,580.0" fill="#8e0890" stroke="#000" stroke-width="0.9" />
<ellipse cx="874.0" cy="549.0" rx="8.0" ry="8.0" fill="#e830e8" stroke="#000" stroke-width="0.5"/>
<ellipse cx="890.0" cy="556.0" rx="5.5" ry="6.3" fill="#10d014" stroke="#000" stroke-width="0.9"/>
<ellipse cx="891.2" cy="556.0" rx="3.0" ry="3.6" fill="#0a8c0e" stroke="#000" stroke-width="0.5"/>
<ellipse cx="852.5" cy="590.0" rx="5.5" ry="6.3" fill="#10d014" stroke="#000" stroke-width="0.9"/>
<ellipse cx="853.7" cy="590.0" rx="3.0" ry="3.6" fill="#0a8c0e" stroke="#000" stroke-width="0.5"/>
<ellipse cx="922.5" cy="584.0" rx="5.5" ry="6.3" fill="#10d014" stroke="#000" stroke-width="0.9"/>
<ellipse cx="923.7" cy="584.0" rx="3.0" ry="3.6" fill="#0a8c0e" stroke="#000" stroke-width="0.5"/>
<polygon points="787.0,490.0 800.0,468.0 810.0,466.0 848.0,520.0 812.0,523.0" fill="#de0c0c" stroke="#000" stroke-width="0.9" />
<polyline points="796.0,480.0 826.0,522.0" fill="none" stroke="#000" stroke-width="0.5" />
<polygon points="806.0,424.0 824.0,442.0 832.0,468.0 810.0,466.0 800.0,468.0 794.0,462.0" fill="#de0c0c" stroke="#000" stroke-width="0" />
<polygon points="803.0,418.0 813.0,422.0 888.0,532.0 884.0,538.0 862.0,538.0 808.0,452.0" fill="#de0c0c" stroke="#000" stroke-width="0.9" />
<polyline points="812.0,440.0 872.0,536.0" fill="none" stroke="#000" stroke-width="0.5" />
<polygon points="792.0,424.0 803.0,418.0 813.0,423.0 816.0,434.0 756.0,545.0 716.0,547.0 715.0,541.0" fill="#de0c0c" stroke="#000" stroke-width="0.9" />
<polyline points="800.0,424.0 728.0,545.0" fill="none" stroke="#000" stroke-width="0.5" />
<polyline points="808.0,428.0 740.0,545.0" fill="none" stroke="#000" stroke-width="0.5" />
<polygon points="714.0,541.0 757.0,539.0 758.0,548.0 715.0,550.0" fill="#bc0808" stroke="#000" stroke-width="0.6" />
<polygon points="806.0,466.0 812.0,462.0 860.0,536.0 850.0,538.0" fill="#960404" stroke="#000" stroke-width="0.6" />
<ellipse cx="807.5" cy="439.0" rx="5.5" ry="6.3" fill="#10d014" stroke="#000" stroke-width="0.9"/>
<ellipse cx="808.7" cy="439.0" rx="3.0" ry="3.6" fill="#0a8c0e" stroke="#000" stroke-width="0.5"/>
<ellipse cx="840.0" cy="481.0" rx="5.5" ry="6.3" fill="#10d014" stroke="#000" stroke-width="0.9"/>
<ellipse cx="841.2" cy="481.0" rx="3.0" ry="3.6" fill="#0a8c0e" stroke="#000" stroke-width="0.5"/>
<ellipse cx="779.0" cy="487.5" rx="5.5" ry="6.3" fill="#10d014" stroke="#000" stroke-width="0.9"/>
<ellipse cx="780.2" cy="487.5" rx="3.0" ry="3.6" fill="#0a8c0e" stroke="#000" stroke-width="0.5"/>
<polygon points="836.0,391.0 836.0,391.0 836.0,391.0 836.0,391.0 836.0,391.0 836.0,391.0 836.0,391.0 836.0,391.0 836.0,391.0 836.0,391.0 836.0,391.0 836.0,391.0 836.0,391.0 836.0,391.0 836.0,391.0 836.0,391.0 836.0,391.0 836.0,391.0 836.0,391.0 836.0,391.0 836.0,391.0 836.0,391.0 836.0,391.0 836.0,391.0 836.0,391.0 836.0,391.0 836.0,391.0 836.0,391.0 836.0,391.0 836.0,391.0 836.0,391.0 836.0,391.0 836.0,391.0 836.0,391.0 836.0,391.0 836.0,391.0 836.0,391.0 836.0,391.0 836.0,391.0 836.0,391.0 836.0,391.0 836.0,391.0 836.0,391.0 836.0,391.0 836.0,391.0 836.0,391.0 836.0,391.0 836.0,391.0 836.0,391.0 836.0,391.0 836.0,391.0 836.0,391.0 836.0,391.0 836.0,391.0 836.0,391.0 836.0,391.0 836.0,391.0 836.0,391.0 836.0,391.0 836.0,391.0 836.0,391.0 836.0,391.0 836.0,391.0 836.0,391.0 836.0,391.0 836.0,391.0 836.0,391.0 836.0,391.0 836.0,391.0 836.0,391.0 836.0,391.0 836.0,391.0 836.0,391.0 836.0,391.0 836.0,391.0 836.0,391.0 836.0,391.0 836.0,391.0 836.0,391.0 836.0,391.0 836.0,391.0 768.0,356.0 768.0,356.0 768.0,356.0 768.0,356.0 768.0,356.0 768.0,356.0 768.0,356.0 768.0,356.0 768.0,356.0 768.0,356.0 768.0,356.0 768.0,356.0 768.0,356.0 768.0,356.0 768.0,356.0 768.0,356.0 768.0,356.0 768.0,356.0 768.0,356.0 768.0,356.0 768.0,356.0 768.0,356.0 768.0,356.0 768.0,356.0 768.0,356.0 768.0,356.0 768.0,356.0 768.0,356.0 768.0,356.0 768.0,356.0 768.0,356.0 768.0,356.0 768.0,356.0 768.0,356.0 768.0,356.0 768.0,356.0 768.0,356.0 768.0,356.0 768.0,356.0 768.0,356.0 768.0,356.0 768.0,356.0 768.0,356.0 768.0,356.0 768.0,356.0 768.0,356.0 768.0,356.0 768.0,356.0 768.0,356.0 768.0,356.0 768.0,356.0 768.0,356.0 768.0,356.0 768.0,356.0 768.0,356.0 768.0,356.0 768.0,356.0 768.0,356.0 768.0,356.0 768.0,356.0 768.0,356.0 768.0,356.0 768.0,356.0 768.0,356.0 768.0,356.0 768.0,356.0 768.0,356.0 768.0,356.0 768.0,356.0 768.0,356.0 768.0,356.0 768.0,356.0 768.0,356.0 768.0,356.0 768.0,356.0 768.0,356.0 768.0,356.0 768.0,356.0 768.0,356.0 768.0,356.0 768.0,356.0" fill="#6e4204" stroke="#000" stroke-width="0" />
<polygon points="836.0,391.0 830.4,382.9 825.6,382.8 820.5,391.5 818.1,392.6 810.1,388.5 805.7,390.5 803.6,399.2 801.2,400.3 793.2,396.2 788.8,398.2 786.7,406.9 784.3,407.9 776.3,403.9 772.0,405.9 769.8,414.5 767.4,415.6 759.4,411.5 755.1,413.5 752.9,422.2 750.5,423.3 742.6,419.2 738.2,421.2 736.0,429.9 733.6,430.9 725.7,426.9 721.3,428.9 719.1,437.5 716.7,438.6 708.8,434.5 704.4,436.5 702.2,445.2 699.8,446.3 691.9,442.2 687.5,444.2 685.3,452.9 682.9,454.0 675.0,449.9 670.6,451.9 668.4,460.6 666.0,461.6 658.1,457.6 653.7,459.6 651.5,468.2 649.2,469.3 641.1,465.3 636.7,467.3 634.7,476.2 632.5,477.4 623.9,474.3 619.9,476.9 619.0,486.0 616.9,487.5 607.1,487.4 604.2,491.3 607.7,500.3 607.0,502.8 599.1,507.7 598.8,512.5 606.0,518.6 606.3,521.2 600.0,528.0 600.9,532.7 609.2,536.8 610.1,539.3 606.3,547.9 608.7,552.1 617.9,553.1 619.4,555.2 617.2,563.9 620.1,567.7 629.0,568.0 630.6,570.0 628.4,578.7 631.3,582.5 640.2,582.8 641.8,584.9 639.5,593.5 642.4,597.4 651.4,597.6 652.9,599.7 650.7,608.3 653.6,612.2 662.5,612.4 664.1,614.5 661.8,623.2 664.7,627.0 673.7,627.3 675.2,629.3 673.4,638.5 676.4,642.3 686.2,640.4 688.8,640.6 695.0,647.0 699.8,646.6 704.7,639.1 707.3,638.9 713.4,645.4 718.2,644.9 723.2,637.5 725.7,637.2 731.9,643.7 736.7,643.3 741.6,635.8 744.2,635.6 750.4,642.0 755.2,641.6 760.1,634.1 762.7,633.9 768.9,640.4 773.7,639.9 778.6,632.4 781.2,632.2 787.4,638.7 792.2,638.2 797.1,630.8 799.7,630.5 805.8,637.0 810.6,636.6 815.6,629.1 818.1,628.9 824.3,635.3 829.1,634.9 834.0,627.4 836.6,627.2 842.8,633.7 847.6,633.2 852.5,625.8 855.1,625.5 861.3,632.0 866.1,631.6 871.0,624.1 873.6,623.7 880.3,629.6 885.1,628.7 889.3,620.8 891.8,620.3 898.6,626.2 903.3,625.3 907.5,617.4 910.1,617.0 917.3,622.7 922.0,621.7 925.3,612.7 927.4,611.2 936.8,611.5 939.7,607.7 937.5,598.9 938.8,596.6 947.7,593.8 949.1,589.2 943.9,581.6 944.5,579.0 952.2,573.3 952.1,568.5 944.3,563.2 943.9,560.6 948.9,552.4 946.9,548.1 937.6,546.1 936.3,543.8 939.5,535.5 937.0,531.3 928.1,530.1 926.8,527.9 929.9,519.5 927.5,515.4 918.6,514.2 917.3,512.0 920.4,503.6 917.9,499.5 909.1,498.3 907.7,496.1 910.9,487.7 908.4,483.6 899.5,482.4 898.2,480.2 901.3,471.8 898.9,467.6 890.0,466.5 888.7,464.2 891.8,455.9 889.3,451.7 880.5,450.5 879.1,448.3 882.3,439.9 879.8,435.8 870.9,434.6 869.6,432.4 872.7,424.0 870.3,419.9 861.4,418.7 860.1,416.5 863.2,408.1 860.7,404.0 851.9,402.8 850.5,400.6 851.9,390.3 848.2,387.3 838.5,391.5 836.0,391.0 836.0,398.0 842.0,399.0 936.0,558.0 939.0,574.0 934.0,592.0 924.0,607.0 692.0,630.5 688.0,630.0 618.0,533.0 614.0,515.0 620.0,496.0 634.0,486.0 822.0,396.5 836.0,398.0" fill="#7a4a06" stroke="#000" stroke-width="0.8" />
</svg>
<!-- layer combo -->
<div class="abs combo" style="left:834px;top:105px;width:120px;height:23px;padding-left:39px;border-color:#c5c8cc;">图层0000</div>
<!-- STATUS BAR -->
<div id="statusbar" class="abs"></div>
<div class="abs" style="left:6px;top:705px;line-height:16px;font-size:12px;color:#222;">选择命令或实体</div>
<div class="abs" style="left:1015px;top:703px;width:345px;height:21px;background:#fff;border:1px solid #c2c6ca;box-sizing:border-box;"></div>
<svg class="abs" style="left:0;top:0" width="1354" height="724" viewBox="0 0 1354 724">
<polygon points="3,4 10.5,2.5 18,4 17,11 13,16 12.5,18 8.5,18 8,16 4,11" fill="#1c7cc8" stroke="#0a3a78" stroke-width="0.8" />
<path d="M7 12 L9 6 L12 5.5 L10.5 9.5 L14 8 L12 14" fill="none" stroke="#fff" stroke-width="2.2" stroke-linejoin="round" stroke-linecap="round"/>
<rect x="24" y="6" width="1" height="13" fill="#9a9da2" stroke="none" stroke-width="1" rx="0" />
<polygon points="39,6 46,6 49.5,9.5 49.5,20 39,20" fill="#fdfdfd" stroke="#b8bbc0" stroke-width="1" />
<path d="M46 6 L46 9.5 L49.5 9.5" fill="none" stroke="#b8bbc0" stroke-width="0.8" />
<polygon points="62,12 67,12 68,10.5 76,10.5 77,12 77,20 62,20" fill="#f6b818" stroke="#c88a08" stroke-width="0.8" />
<polygon points="63.5,14 77,14 76.5,20 62.5,20" fill="#ffd84a" stroke="#d89c10" stroke-width="0.6" />
<path d="M71.5 7.5 C69 5.5 65.5 6 64.5 9.5" fill="none" stroke="#c81c14" stroke-width="2.4" />
<polygon points="61,8.5 67.5,9.5 63.5,13.5" fill="#c81c14" stroke="none" stroke-width="1" />
<rect x="84" y="5" width="16" height="15" fill="#16486e" stroke="#0c2c48" stroke-width="0.8" rx="1" />
<rect x="86.5" y="6" width="11" height="6.5" fill="#9ed4ee" stroke="none" stroke-width="1" rx="0" />
<rect x="86.5" y="8" width="11" height="0.8" fill="#5aa8d0" stroke="none" stroke-width="1" rx="0" />
<rect x="86.5" y="10" width="11" height="0.8" fill="#5aa8d0" stroke="none" stroke-width="1" rx="0" />
<rect x="88.5" y="14.5" width="8" height="5.5" fill="#c8ccd0" stroke="none" stroke-width="1" rx="0" />
<rect x="93.5" y="15.5" width="2" height="3.8" fill="#16486e" stroke="none" stroke-width="1" rx="0" />
<polygon points="112,7 121,7 122,11 111,11" fill="#f4f4f4" stroke="#aaa" stroke-width="0.6" />
<polygon points="108,12 111,10.5 122,10.5 124.5,12 124.5,17.5 122,19 110,19 108,17.5" fill="#70747a" stroke="#44484c" stroke-width="0.7" />
<rect x="109" y="15.5" width="14.5" height="1.2" fill="#3c4044" stroke="none" stroke-width="1" rx="0" />
<rect x="118.5" y="13" width="2.6" height="1.4" fill="#c8d820" stroke="none" stroke-width="1" rx="0" />
<path d="M135.5 13.5 C137 9 143 8.5 145.5 15.5" fill="none" stroke="#38a0c0" stroke-width="2.6" />
<polygon points="132.5,12 138.5,10.5 137,15.5" fill="#38a0c0" stroke="none" stroke-width="1" />
<path d="M159.5 15.5 C161 9.5 166 9.5 168 12" fill="none" stroke="#b0b4b8" stroke-width="2.4" />
<polygon points="171,10.5 165.5,10 168.5,15" fill="#b0b4b8" stroke="none" stroke-width="1" />
<path d="M194.6 15.4 A7 7 0 0 1 189.5 19.8" fill="none" stroke="#3aa8a8" stroke-width="2.4" />
<polygon points="190.0,22.4 188.9,17.3 187.0,19.9" fill="#3aa8a8" stroke="none" stroke-width="1" />
<path d="M185.6 19.6 A7 7 0 0 1 181.2 14.5" fill="none" stroke="#3aa8a8" stroke-width="2.4" />
<polygon points="178.6,15.0 183.7,13.9 181.1,12.0" fill="#3aa8a8" stroke="none" stroke-width="1" />
<path d="M181.4 10.6 A7 7 0 0 1 186.5 6.2" fill="none" stroke="#3aa8a8" stroke-width="2.4" />
<polygon points="186.0,3.6 187.1,8.7 189.0,6.1" fill="#3aa8a8" stroke="none" stroke-width="1" />
<path d="M190.4 6.4 A7 7 0 0 1 194.8 11.5" fill="none" stroke="#3aa8a8" stroke-width="2.4" />
<polygon points="197.4,11.0 192.3,12.1 194.9,14.0" fill="#3aa8a8" stroke="none" stroke-width="1" />
<polygon points="201.5,11.0 207.5,11.0 204.5,14.5" fill="#444" stroke="none" stroke-width="1" />
<rect x="216" y="10.5" width="7.5" height="1.4" fill="#111" stroke="none" stroke-width="1" rx="0" />
<polygon points="216.5,13.5 223,13.5 219.75,17" fill="#111" stroke="none" stroke-width="1" />
<polygon points="233,8 239.5,13.5 233,19" fill="#2c9ae0" stroke="none" stroke-width="1" />
<rect x="1298.5" y="13.5" width="7.5" height="3" fill="#fff" stroke="#777" stroke-width="1" rx="1" />
<rect x="1323.5" y="8.5" width="8" height="7" fill="#eceff2" stroke="#777" stroke-width="1" rx="0" />
<rect x="1320.5" y="11.5" width="8" height="7" fill="#eceff2" stroke="#777" stroke-width="1" rx="0" />
<rect x="1322.5" y="14" width="3.5" height="2.5" fill="#fff" stroke="#777" stroke-width="0.8" rx="0" />
<path d="M1346.5 8.5 L1356 17 M1356 8.5 L1346.5 17" fill="none" stroke="#777" stroke-width="3.4" />
<path d="M1346.5 8.5 L1356 17 M1356 8.5 L1346.5 17" fill="none" stroke="#fff" stroke-width="1.6" />
<path d="M1260.5 35.5 L1264.5 40 L1268.5 35.5" fill="none" stroke="#333" stroke-width="3.6" stroke-linecap="round" stroke-linejoin="round"/>
<path d="M1260.5 35.5 L1264.5 40 L1268.5 35.5" fill="none" stroke="#fff" stroke-width="1.6" stroke-linecap="round" stroke-linejoin="round"/>
<polygon points="1312.6,37.5 1312.5,39.0 1310.7,39.9 1310.2,40.9 1310.4,42.9 1309.2,43.8 1307.4,43.2 1306.2,43.6 1305.0,45.1 1303.5,45.0 1302.6,43.2 1301.6,42.7 1299.6,42.9 1298.7,41.7 1299.3,39.9 1298.9,38.7 1297.4,37.5 1297.5,36.0 1299.3,35.1 1299.8,34.1 1299.6,32.1 1300.8,31.2 1302.6,31.8 1303.8,31.4 1305.0,29.9 1306.5,30.0 1307.4,31.8 1308.4,32.3 1310.4,32.1 1311.3,33.3 1310.7,35.1 1311.1,36.3" fill="#f4f5f6" stroke="#8a8d92" stroke-width="1" />
<circle cx="1305" cy="37.5" r="3.2" fill="#e4e7ea" stroke="#8a8d92" stroke-width="1" />
<circle cx="1339" cy="37.5" r="7.6" fill="#2050b0" stroke="#c8d4f0" stroke-width="1.2" />
<text x="1339" y="42" font-family="Liberation Sans, sans-serif" font-size="12.5" font-weight="bold" fill="#fff" text-anchor="middle">?</text>
<rect x="4" y="57" width="2" height="2" fill="#555" stroke="none" stroke-width="1" rx="0" />
<rect x="4" y="61" width="2" height="2" fill="#555" stroke="none" stroke-width="1" rx="0" />
<rect x="4" y="65" width="2" height="2" fill="#555" stroke="none" stroke-width="1" rx="0" />
<rect x="4" y="69" width="2" height="2" fill="#555" stroke="none" stroke-width="1" rx="0" />
<polygon points="16.5,58 16.5,69.5 19.3,67 21.3,71.5 23.2,70.7 21.2,66.3 24.5,66" fill="#28b0e0" stroke="#1878a8" stroke-width="0.5" />
<ellipse cx="27" cy="63.2" rx="3.4" ry="4" fill="#fbd830" stroke="#d8a010" stroke-width="0.6" />
<rect x="25.6" y="67" width="2.8" height="2.6" fill="#b88a20" stroke="none" stroke-width="1" rx="0" />
<path d="M47 57.5 V71 M40.2 64.2 H53.8" fill="none" stroke="#5a9a18" stroke-width="5.2" stroke-linecap="round"/>
<path d="M47 58 V70.5 M40.8 63.8 H53.2" fill="none" stroke="#9ccc3c" stroke-width="3.2" stroke-linecap="round"/>
<path d="M65 64 H78.5" fill="none" stroke="#b81c24" stroke-width="4.4" stroke-linecap="round"/>
<path d="M65.5 63.5 H78" fill="none" stroke="#e04848" stroke-width="2" stroke-linecap="round"/>
<rect x="88.5" y="57.5" width="14.5" height="13.5" fill="none" stroke="#3c8ca0" stroke-width="1.6" rx="0" stroke-dasharray="2 1.6"/>
<path d="M95.7 60 V68.5 M91.5 64.2 H100" fill="none" stroke="#d02020" stroke-width="1.4" />
<polygon points="108.5,62.0 114.5,62.0 111.5,65.5" fill="#333" stroke="none" stroke-width="1" />
<polygon points="123.5,64 127.3,57.5 134.8,57.5 138.6,64 134.8,70.6 127.3,70.6" fill="none" stroke="#6a9aa8" stroke-width="1.6" stroke-dasharray="1.6 1.6"/>
<rect x="147" y="55" width="1" height="18" fill="#b4b7bb" stroke="none" stroke-width="1" rx="0" />
<rect x="154" y="62" width="3.2" height="10" fill="#d42020" stroke="none" stroke-width="1" rx="0" />
<rect x="157.2" y="62" width="3.2" height="10" fill="#20a030" stroke="none" stroke-width="1" rx="0" />
<rect x="160.4" y="62" width="3.2" height="10" fill="#2040b0" stroke="none" stroke-width="1" rx="0" />
<polygon points="160.5,56 167,56 164.8,59.5 164.8,63.5 162.8,63.5 162.8,59.5" fill="#20a8d8" stroke="#1880a8" stroke-width="0.4" />
<polygon points="293.5,63 300,58.5 308.5,61 308.5,67.5 301.5,72 293.5,69" fill="#2c9ab8" stroke="#1a6a88" stroke-width="0.6" />
<polygon points="293.5,63 300,58.5 308.5,61 301.5,66" fill="#f0c828" stroke="#a88a10" stroke-width="0.5" />
<polygon points="298.5,57 306.5,57 305,60 303.6,60 303.6,64.5 301.6,64.5 301.6,60 300,60" fill="#1c8a9c" stroke="none" stroke-width="1" />
<path d="M472 59 h13 M474 59 a2 2 0 1 0 0.1 0 M483 59 a2 2 0 1 0 0.1 0" fill="none" stroke="#9ea1a4" stroke-width="1" />
<rect x="472" y="63" width="13" height="1.6" fill="#a4a7aa" stroke="none" stroke-width="1" rx="0" />
<rect x="478" y="68" width="8" height="1.2" fill="#a4a7aa" stroke="none" stroke-width="1" rx="0" />
<rect x="478" y="70.5" width="8" height="1.2" fill="#a4a7aa" stroke="none" stroke-width="1" rx="0" />
<circle cx="502" cy="62" r="5.5" fill="#d8dadc" stroke="#b8bbbe" stroke-width="0.8" />
<rect x="495" y="65.5" width="14" height="1.6" fill="#a4a7aa" stroke="none" stroke-width="1" rx="0" />
<rect x="502" y="68.5" width="8" height="1.2" fill="#a4a7aa" stroke="none" stroke-width="1" rx="0" />
<rect x="502" y="71" width="8" height="1.2" fill="#a4a7aa" stroke="none" stroke-width="1" rx="0" />
<rect x="518" y="55" width="1" height="19" fill="#b4b7bb" stroke="none" stroke-width="1" rx="0" />
<rect x="525" y="57.5" width="7" height="4" fill="#9a9da0" stroke="none" stroke-width="1" rx="0" />
<rect x="525" y="62.5" width="7" height="4" fill="#9a9da0" stroke="none" stroke-width="1" rx="0" />
<rect x="525" y="67.5" width="7" height="4" fill="#9a9da0" stroke="none" stroke-width="1" rx="0" />
<polygon points="535.5,61 535.5,70 537.5,68.2 539,71.5 540.3,71 538.8,67.8 541.2,67.6" fill="#fafafa" stroke="#c4c6c8" stroke-width="0.6" />
<rect x="548.5" y="57.5" width="7" height="4" fill="#1c9ab0" stroke="none" stroke-width="1" rx="0" />
<rect x="548.5" y="62.5" width="7" height="4" fill="#1c9ab0" stroke="none" stroke-width="1" rx="0" />
<rect x="548.5" y="67.5" width="7" height="4" fill="#1c9ab0" stroke="none" stroke-width="1" rx="0" />
<rect x="552" y="67.5" width="4.5" height="4.5" fill="#b82030" stroke="none" stroke-width="1" rx="1.5" />
<polygon points="559.5,61 559.5,70 561.5,68.2 563,71.5 564.3,71 562.8,67.8 565.2,67.6" fill="#fafafa" stroke="#b4b6b8" stroke-width="0.6" />
<rect x="573" y="57.5" width="7" height="4" fill="#9a9da0" stroke="none" stroke-width="1" rx="0" />
<rect x="573" y="62.5" width="7" height="4" fill="#9a9da0" stroke="none" stroke-width="1" rx="0" />
<rect x="573" y="67.5" width="7" height="4" fill="#9a9da0" stroke="none" stroke-width="1" rx="0" />
<polygon points="583.5,61 583.5,70 585.5,68.2 587,71.5 588.3,71 586.8,67.8 589.2,67.6" fill="#f4f4f4" stroke="#c8cacc" stroke-width="0.6" />
<polygon points="600.5,58 600.5,68.5 603,66.3 605,70.8 606.8,70 604.8,65.8 608.5,65.5" fill="#8a8d90" stroke="none" stroke-width="1" />
<rect x="621" y="55" width="1" height="19" fill="#b4b7bb" stroke="none" stroke-width="1" rx="0" />
<circle cx="635.5" cy="64.5" r="7" fill="#c8cacc" stroke="#a0a3a6" stroke-width="0.8" />
<path d="M630 61 a7 7 0 0 1 11 0 M630 68 a7 7 0 0 0 11 0" fill="none" stroke="#888b8e" stroke-width="1.6" />
<polygon points="633,59.5 633,68 635,66.3 636.6,69.8 638,69.2 636.4,65.8 639.2,65.6" fill="#7e8184" stroke="none" stroke-width="1" />
<polygon points="768.5,57 768.5,68 771,65.8 773,70.2 774.8,69.5 772.8,65.2 776.5,65" fill="#9a9da0" stroke="none" stroke-width="1" />
<ellipse cx="778" cy="67.5" rx="3" ry="2.2" fill="#e8e8e8" stroke="#b0b3b6" stroke-width="0.6" />
<polygon points="790.5,61 790.5,71 793,69 794.8,72.5 796.3,71.8 794.5,68.5 797.8,68.2" fill="#9a9da0" stroke="none" stroke-width="1" />
<circle cx="799.5" cy="61.5" r="3.2" fill="none" stroke="#9a9da0" stroke-width="2.2" />
<circle cx="799.5" cy="61.5" r="5.2" fill="none" stroke="#b8bbbe" stroke-width="1" stroke-dasharray="1.4 1.4"/>
<path d="M22 85.5 V95 M17.3 90.2 H26.7" fill="none" stroke="#6a5a18" stroke-width="1.8" />
<path d="M235 86 L243.5 94.5 M243.5 86 L235 94.5" fill="none" stroke="#7a6a28" stroke-width="1.8" />
<path d="M270 85.5 V95 M265.3 90.2 H274.7" fill="none" stroke="#9a9da0" stroke-width="1.6" />
<rect x="1346" y="87" width="8" height="1.2" fill="#666" stroke="none" stroke-width="1" rx="0" />
<polygon points="1347.5,90 1354,90 1351,93.5" fill="#666" stroke="none" stroke-width="1" />
<rect x="416" y="108" width="13.5" height="17" fill="#1c5c9c" stroke="#0c3c6c" stroke-width="0.6" rx="1.5" />
<circle cx="424.5" cy="111.5" r="1.6" fill="#fff" stroke="none" stroke-width="1" />
<path d="M424 113.5 L422.5 118 L419.5 122 M422.8 117.5 L426 119.5 L426.5 123 M423.8 114 L420.5 116 M424 114 L427.5 116" fill="none" stroke="#fff" stroke-width="1.5" stroke-linecap="round"/>
<polygon points="442,120 451,108.5 456,111.5 447,123.5" fill="#f8f4ec" stroke="#a0a0a0" stroke-width="0.5" />
<polygon points="442,120 445.5,115.5 450.5,119 447,123.5" fill="#d02828" stroke="none" stroke-width="1" />
<polygon points="449.5,110.5 451,108.5 456,111.5 454.5,113.5" fill="#f0c020" stroke="none" stroke-width="1" />
<polygon points="467,116 476,112 485,115.5 485,120.5 476,124.5 467,121" fill="#a8d8ec" stroke="#4a8aa8" stroke-width="0.6" />
<polygon points="467,116 476,112 485,115.5 476,119.5" fill="#f4cc28" stroke="#b89410" stroke-width="0.5" />
<path d="M476 109 V116" fill="none" stroke="#4a9a30" stroke-width="1.4" />
<polygon points="492,112.5 503,108 511,111 511,120 500,124.5 492,121.5" fill="#2c8cc8" stroke="#14587c" stroke-width="0.6" />
<polygon points="492,112.5 503,108 511,111 500,115.5" fill="#8cd0f0" stroke="#14587c" stroke-width="0.4" />
<polygon points="492,112.5 500,115.5 500,124.5 492,121.5" fill="#b8e4f8" stroke="#14587c" stroke-width="0.4" />
<polygon points="516.5,114.0 522.5,114.0 519.5,117.5" fill="#333" stroke="none" stroke-width="1" />
<polygon points="532,114 541,110.5 549,113.5 549,120.5 540,124.5 532,121.5" fill="#2888c0" stroke="#14587c" stroke-width="0.6" />
<polygon points="532,114 541,110.5 549,113.5 540,117" fill="#70c0e8" stroke="#14587c" stroke-width="0.4" />
<rect x="530.5" y="107.5" width="8.5" height="8.5" fill="#e8f0f8" stroke="#3868a0" stroke-width="0.8" rx="0" />
<path d="M536.5 109.5 L533.5 111.8 L536.5 114 Z" fill="none" stroke="#3868a0" stroke-width="0.8" />
<polygon points="554.5,114.0 560.5,114.0 557.5,117.5" fill="#333" stroke="none" stroke-width="1" />
<polygon points="568,113.5 578,108 588,113.5 588,120 578,125.5 568,120" fill="#2c98c8" stroke="#0c4868" stroke-width="0.7" />
<polygon points="568,113.5 578,108 588,113.5 578,118.5" fill="#f4b828" stroke="#0c4868" stroke-width="0.5" />
<path d="M578 118.5 V125.5 M568 120 L578 115.5 L588 120" fill="none" stroke="#0c4868" stroke-width="0.6" />
<polygon points="592.5,114.0 598.5,114.0 595.5,117.5" fill="#333" stroke="none" stroke-width="1" />
<rect x="607.5" y="108.5" width="17" height="16" fill="#9ccce8" stroke="#2c78b0" stroke-width="1.6" rx="0" />
<circle cx="616" cy="116.5" r="6.2" fill="#f4e4a0" stroke="#d8a820" stroke-width="1.6" />
<rect x="613.5" y="113" width="5" height="7" fill="#f8f8f8" stroke="#b0b0b0" stroke-width="0.5" rx="0" />
<path d="M620.5 121 L625 125.5" fill="none" stroke="#6088a8" stroke-width="2" />
<polygon points="631.5,114.0 637.5,114.0 634.5,117.5" fill="#333" stroke="none" stroke-width="1" />
<rect x="645.5" y="109.5" width="16" height="14.5" fill="#f4f8fc" stroke="#7a9ab8" stroke-width="1" rx="0" />
<rect x="648" y="118.5" width="4" height="3.5" fill="#3878b8" stroke="none" stroke-width="1" rx="0" />
<path d="M655 113 h4 v4 M650 113 h-2.5 v2.5 M659 119 q0 3 -3 3" fill="none" stroke="#68a8d0" stroke-width="0.9" />
<path d="M673.5 108 V122 M687 108 V122" fill="none" stroke="#2890a8" stroke-width="1.4" />
<path d="M675 114 H685.5" fill="none" stroke="#2890a8" stroke-width="1" />
<polygon points="674.5,114 677.5,112.2 677.5,115.8" fill="#2890a8" stroke="none" stroke-width="1" />
<polygon points="686,114 683,112.2 683,115.8" fill="#2890a8" stroke="none" stroke-width="1" />
<path d="M672.5 124.5 H688" fill="none" stroke="#d83030" stroke-width="1.8" />
<polygon points="695.5,114.0 701.5,114.0 698.5,117.5" fill="#333" stroke="none" stroke-width="1" />
<rect x="709.5" y="108.5" width="18" height="13" fill="#7888a0" stroke="#50586a" stroke-width="1" rx="1" />
<rect x="711" y="110" width="15" height="10" fill="#a8b4c8" stroke="none" stroke-width="1" rx="0" />
<rect x="711" y="110" width="15" height="4" fill="#5c6c8c" stroke="none" stroke-width="1" rx="0" />
<ellipse cx="718.5" cy="123.5" rx="6.5" ry="1.8" fill="#888c94" stroke="none" stroke-width="1" />
<polygon points="733.5,114.0 739.5,114.0 736.5,117.5" fill="#333" stroke="none" stroke-width="1" />
<rect x="748.5" y="109.5" width="16.5" height="15" fill="#000" stroke="#000" stroke-width="1" rx="0" />
<rect x="774.5" y="109.5" width="16.5" height="15" fill="#c4e6f6" stroke="#20282c" stroke-width="1.2" rx="0" />
<polygon points="800,116 809,112 818.5,115 818.5,118.5 809.5,123 800,119.5" fill="#1c98a8" stroke="#0c5c68" stroke-width="0.6" />
<polygon points="800,116 809,112 818.5,115 809.5,119" fill="#58c8d8" stroke="#0c5c68" stroke-width="0.4" />
<polygon points="801,112.5 808,110 811,111 804,114" fill="#8cdce8" stroke="#1c8898" stroke-width="0.4" />
<polygon points="823.5,114.0 829.5,114.0 826.5,117.5" fill="#333" stroke="none" stroke-width="1" />
<path d="M846 109.5 a4.2 4.2 0 0 1 2.2 7.8 v2.2 h-4.4 v-2.2 a4.2 4.2 0 0 1 2.2 -7.8 Z" fill="#fffbe0" stroke="#555" stroke-width="1" />
<rect x="844.3" y="120.3" width="3.4" height="2.2" fill="#8a8a8a" stroke="none" stroke-width="1" rx="0" />
<circle cx="863.5" cy="116.5" r="6.2" fill="#f8e050" stroke="#2a9aa8" stroke-width="1.2" />
<rect x="938" y="105.5" width="0.8" height="22" fill="#c5c8cc" stroke="none" stroke-width="1" rx="0" />
<polygon points="943,114.5 949,114.5 946,118" fill="#333" stroke="none" stroke-width="1" />
<rect x="948.5" y="699" width="1.2" height="25" fill="#9a9da0" stroke="none" stroke-width="1" rx="0" />
<rect x="961" y="706" width="14" height="13.5" fill="#e8f0f8" stroke="#3868b0" stroke-width="1.2" rx="0" />
<path d="M963.5 709 v8" fill="none" stroke="#3868b0" stroke-width="1.4" stroke-dasharray="1.4 1.2"/>
<path d="M969 710 V718 M966.5 710.5 h5.5" fill="none" stroke="#b82020" stroke-width="2" />
<rect x="990" y="706" width="14" height="13.5" fill="#e8f0f8" stroke="#3868b0" stroke-width="1.2" rx="0" />
<rect x="990" y="706" width="14" height="2.6" fill="#3868b0" stroke="none" stroke-width="1" rx="0" />
<path d="M992.5 711.5 h9 M992.5 714 h9 M992.5 716.5 h9" fill="none" stroke="#4a5a78" stroke-width="0.9" />
<circle cx="1368" cy="672" r="21.5" fill="#f8faf8" stroke="#c8d0c8" stroke-width="1.5" />
<circle cx="1368" cy="672" r="18.5" fill="#38b858" stroke="#2a9444" stroke-width="1" />
<rect x="1352" y="668" width="3" height="2.5" fill="#fff" stroke="none" stroke-width="1" rx="0" />
<rect x="1352" y="673" width="3" height="2.5" fill="#fff" stroke="none" stroke-width="1" rx="0" />
<g fill="#fff" opacity="0.95"><rect x="1266" y="697" width="8" height="5"/><rect x="1276" y="698" width="9" height="5"/><rect x="1287" y="697" width="13" height="4"/><rect x="1302" y="699" width="12" height="4"/><rect x="1316" y="697" width="8" height="3"/><rect x="1327" y="697" width="11" height="5"/></g>
<path d="M57.5 639 L34.5 630" fill="none" stroke="#18b828" stroke-width="4.2" />
<polygon points="38.5,626 37,635.5 33.5,629.5" fill="#20d030" stroke="none" stroke-width="1" />
<polygon points="44,627.5 41.5,636.5 34,629.8" fill="#28d838" stroke="none" stroke-width="1" />
<path d="M58 639 L78 635.2" fill="none" stroke="#c01818" stroke-width="4.2" />
<polygon points="75,630.5 77,640 84.5,634.3" fill="#d82020" stroke="none" stroke-width="1" />
<polygon points="80,631.5 81,637.5 84.5,634.3" fill="#8a0c0c" stroke="none" stroke-width="1" />
<path d="M57.8 640.5 L59.8 613" fill="none" stroke="#1818d8" stroke-width="4.6" />
<polygon points="55.8,614.5 63.8,615 60.6,606.5" fill="#2828f0" stroke="none" stroke-width="1" />
<path d="M59.2 640 L61 613" fill="none" stroke="#6868ff" stroke-width="1.2" />
<text x="62" y="605" font-family="Liberation Serif, serif" font-size="14" fill="#4040c8" text-anchor="middle" transform="translate(62 0) scale(0.8 1) translate(-62 0)">Z</text>
<text x="30" y="634" font-family="Liberation Serif, serif" font-size="14" fill="#58d068" text-anchor="middle" transform="translate(30 0) scale(0.8 1) translate(-30 0)">Y</text>
<text x="89.5" y="639" font-family="Liberation Serif, serif" font-size="14" fill="#e04848" text-anchor="middle" transform="translate(89.5 0) scale(0.8 1) translate(-89.5 0)">X</text>
</svg>
</body>
</html>
